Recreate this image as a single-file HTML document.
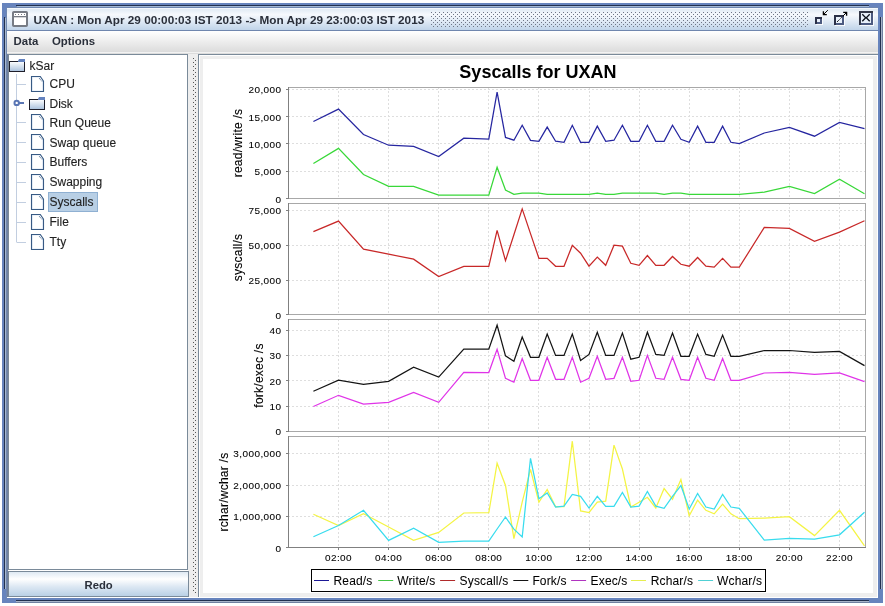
<!DOCTYPE html>
<html><head><meta charset="utf-8"><style>
html,body{margin:0;padding:0;}
body{width:885px;height:606px;overflow:hidden;background:#fff;position:relative;font-family:"Liberation Sans",sans-serif;}
svg{position:absolute;left:0;top:0;will-change:transform;}
text{font-family:"Liberation Sans",sans-serif;}
.tk{font-size:10px;letter-spacing:0.42px;fill:#000;stroke:#000;stroke-width:0.08px;}
.yl{font-size:12px;letter-spacing:0.25px;fill:#000;stroke:#000;stroke-width:0.12px;}
.lg{font-size:12px;letter-spacing:0.15px;fill:#000;stroke:#000;stroke-width:0.05px;}
.tr{font-size:12px;fill:#222;stroke:#222;stroke-width:0.12px;}
.tt{font-size:11.75px;font-weight:bold;fill:#2a2f3a;}
.mn{font-size:11.4px;font-weight:bold;fill:#2a2f3a;}
.ttl{font-size:18px;font-weight:bold;fill:#000;}
</style></head><body>
<svg width="885" height="606" viewBox="0 0 885 606" shape-rendering="auto">
<defs>
<linearGradient id="tg" x1="0" y1="0" x2="0" y2="1">
 <stop offset="0" stop-color="#dde8f3"/><stop offset="0.3" stop-color="#f6f9fd"/><stop offset="0.6" stop-color="#e0eaf5"/><stop offset="1" stop-color="#c0d4e9"/>
</linearGradient>
<linearGradient id="mg" x1="0" y1="0" x2="0" y2="1">
 <stop offset="0" stop-color="#ffffff"/><stop offset="1" stop-color="#dadada"/>
</linearGradient>
<linearGradient id="bg" x1="0" y1="0" x2="0" y2="1">
 <stop offset="0" stop-color="#dde8f3"/><stop offset="0.3" stop-color="#ffffff"/><stop offset="0.6" stop-color="#dde8f3"/><stop offset="1" stop-color="#b8cfe5"/>
</linearGradient>
<linearGradient id="fg" x1="0" y1="0" x2="0" y2="1">
 <stop offset="0" stop-color="#ffffff"/><stop offset="1" stop-color="#a8c0dc"/>
</linearGradient>
<clipPath id="pc1"><rect x="288" y="87" width="578" height="112"/></clipPath>
<clipPath id="pc2"><rect x="288" y="203" width="578" height="112"/></clipPath>
<clipPath id="pc3"><rect x="288" y="319" width="578" height="113"/></clipPath>
<clipPath id="pc4"><rect x="288" y="436" width="578" height="112"/></clipPath>
</defs>
<!-- window frame -->
<rect x="2" y="3" width="881" height="600" fill="#6784bd"/>
<rect x="16" y="5" width="853" height="1" fill="#22304f"/>
<rect x="17" y="6" width="852" height="1" fill="#a3b8d4"/>
<rect x="7" y="7" width="871" height="1" fill="#6e86b0"/>
<rect x="4" y="17" width="1" height="572" fill="#22304f"/>
<rect x="5" y="18" width="1" height="571" fill="#a8b8cc"/>
<rect x="6" y="8" width="1" height="590" fill="#7088b0"/>
<rect x="880" y="17" width="1" height="572" fill="#22304f"/>
<rect x="881" y="17" width="1" height="572" fill="#a8b4c8"/>
<rect x="882" y="17" width="1" height="572" fill="#7080a0"/>
<rect x="16" y="600" width="853" height="1" fill="#22304f"/>
<rect x="16" y="601" width="853" height="1" fill="#a8b4c8"/>
<rect x="16" y="602" width="853" height="1" fill="#7080a0"/>
<!-- content -->
<rect x="7" y="8" width="871" height="590" fill="#eeeeee"/>
<!-- title bar -->
<rect x="7" y="8" width="871" height="22" fill="url(#tg)"/>
<rect x="7" y="8" width="871" height="1" fill="#f4f8fc"/>
<rect x="7" y="30" width="871" height="1" fill="#6f86ae"/>
<!-- frame icon -->
<rect x="13" y="12" width="14" height="14" rx="0.8" fill="#fff" stroke="#767b84" stroke-width="2"/>
<rect x="13" y="16" width="14" height="1.3" fill="#767b84"/>
<rect x="15" y="14" width="1" height="1" fill="#767b84"/><rect x="18" y="14" width="1" height="1" fill="#767b84"/><rect x="21" y="14" width="1" height="1" fill="#767b84"/><rect x="24" y="14" width="1" height="1" fill="#767b84"/>
<text x="33.6" y="23.6" class="tt">UXAN : Mon Apr 29 00:00:03 IST 2013 -&gt; Mon Apr 29 23:00:03 IST 2013</text>
<rect x="431" y="12" width="1" height="1" fill="#6f7686"/><rect x="435" y="12" width="1" height="1" fill="#6f7686"/><rect x="439" y="12" width="1" height="1" fill="#6f7686"/><rect x="443" y="12" width="1" height="1" fill="#6f7686"/><rect x="447" y="12" width="1" height="1" fill="#6f7686"/><rect x="451" y="12" width="1" height="1" fill="#6f7686"/><rect x="455" y="12" width="1" height="1" fill="#6f7686"/><rect x="459" y="12" width="1" height="1" fill="#6f7686"/><rect x="463" y="12" width="1" height="1" fill="#6f7686"/><rect x="467" y="12" width="1" height="1" fill="#6f7686"/><rect x="471" y="12" width="1" height="1" fill="#6f7686"/><rect x="475" y="12" width="1" height="1" fill="#6f7686"/><rect x="479" y="12" width="1" height="1" fill="#6f7686"/><rect x="483" y="12" width="1" height="1" fill="#6f7686"/><rect x="487" y="12" width="1" height="1" fill="#6f7686"/><rect x="491" y="12" width="1" height="1" fill="#6f7686"/><rect x="495" y="12" width="1" height="1" fill="#6f7686"/><rect x="499" y="12" width="1" height="1" fill="#6f7686"/><rect x="503" y="12" width="1" height="1" fill="#6f7686"/><rect x="507" y="12" width="1" height="1" fill="#6f7686"/><rect x="511" y="12" width="1" height="1" fill="#6f7686"/><rect x="515" y="12" width="1" height="1" fill="#6f7686"/><rect x="519" y="12" width="1" height="1" fill="#6f7686"/><rect x="523" y="12" width="1" height="1" fill="#6f7686"/><rect x="527" y="12" width="1" height="1" fill="#6f7686"/><rect x="531" y="12" width="1" height="1" fill="#6f7686"/><rect x="535" y="12" width="1" height="1" fill="#6f7686"/><rect x="539" y="12" width="1" height="1" fill="#6f7686"/><rect x="543" y="12" width="1" height="1" fill="#6f7686"/><rect x="547" y="12" width="1" height="1" fill="#6f7686"/><rect x="551" y="12" width="1" height="1" fill="#6f7686"/><rect x="555" y="12" width="1" height="1" fill="#6f7686"/><rect x="559" y="12" width="1" height="1" fill="#6f7686"/><rect x="563" y="12" width="1" height="1" fill="#6f7686"/><rect x="567" y="12" width="1" height="1" fill="#6f7686"/><rect x="571" y="12" width="1" height="1" fill="#6f7686"/><rect x="575" y="12" width="1" height="1" fill="#6f7686"/><rect x="579" y="12" width="1" height="1" fill="#6f7686"/><rect x="583" y="12" width="1" height="1" fill="#6f7686"/><rect x="587" y="12" width="1" height="1" fill="#6f7686"/><rect x="591" y="12" width="1" height="1" fill="#6f7686"/><rect x="595" y="12" width="1" height="1" fill="#6f7686"/><rect x="599" y="12" width="1" height="1" fill="#6f7686"/><rect x="603" y="12" width="1" height="1" fill="#6f7686"/><rect x="607" y="12" width="1" height="1" fill="#6f7686"/><rect x="611" y="12" width="1" height="1" fill="#6f7686"/><rect x="615" y="12" width="1" height="1" fill="#6f7686"/><rect x="619" y="12" width="1" height="1" fill="#6f7686"/><rect x="623" y="12" width="1" height="1" fill="#6f7686"/><rect x="627" y="12" width="1" height="1" fill="#6f7686"/><rect x="631" y="12" width="1" height="1" fill="#6f7686"/><rect x="635" y="12" width="1" height="1" fill="#6f7686"/><rect x="639" y="12" width="1" height="1" fill="#6f7686"/><rect x="643" y="12" width="1" height="1" fill="#6f7686"/><rect x="647" y="12" width="1" height="1" fill="#6f7686"/><rect x="651" y="12" width="1" height="1" fill="#6f7686"/><rect x="655" y="12" width="1" height="1" fill="#6f7686"/><rect x="659" y="12" width="1" height="1" fill="#6f7686"/><rect x="663" y="12" width="1" height="1" fill="#6f7686"/><rect x="667" y="12" width="1" height="1" fill="#6f7686"/><rect x="671" y="12" width="1" height="1" fill="#6f7686"/><rect x="675" y="12" width="1" height="1" fill="#6f7686"/><rect x="679" y="12" width="1" height="1" fill="#6f7686"/><rect x="683" y="12" width="1" height="1" fill="#6f7686"/><rect x="687" y="12" width="1" height="1" fill="#6f7686"/><rect x="691" y="12" width="1" height="1" fill="#6f7686"/><rect x="695" y="12" width="1" height="1" fill="#6f7686"/><rect x="699" y="12" width="1" height="1" fill="#6f7686"/><rect x="703" y="12" width="1" height="1" fill="#6f7686"/><rect x="707" y="12" width="1" height="1" fill="#6f7686"/><rect x="711" y="12" width="1" height="1" fill="#6f7686"/><rect x="715" y="12" width="1" height="1" fill="#6f7686"/><rect x="719" y="12" width="1" height="1" fill="#6f7686"/><rect x="723" y="12" width="1" height="1" fill="#6f7686"/><rect x="727" y="12" width="1" height="1" fill="#6f7686"/><rect x="731" y="12" width="1" height="1" fill="#6f7686"/><rect x="735" y="12" width="1" height="1" fill="#6f7686"/><rect x="739" y="12" width="1" height="1" fill="#6f7686"/><rect x="743" y="12" width="1" height="1" fill="#6f7686"/><rect x="747" y="12" width="1" height="1" fill="#6f7686"/><rect x="751" y="12" width="1" height="1" fill="#6f7686"/><rect x="755" y="12" width="1" height="1" fill="#6f7686"/><rect x="759" y="12" width="1" height="1" fill="#6f7686"/><rect x="763" y="12" width="1" height="1" fill="#6f7686"/><rect x="767" y="12" width="1" height="1" fill="#6f7686"/><rect x="771" y="12" width="1" height="1" fill="#6f7686"/><rect x="775" y="12" width="1" height="1" fill="#6f7686"/><rect x="779" y="12" width="1" height="1" fill="#6f7686"/><rect x="783" y="12" width="1" height="1" fill="#6f7686"/><rect x="787" y="12" width="1" height="1" fill="#6f7686"/><rect x="791" y="12" width="1" height="1" fill="#6f7686"/><rect x="795" y="12" width="1" height="1" fill="#6f7686"/><rect x="799" y="12" width="1" height="1" fill="#6f7686"/><rect x="803" y="12" width="1" height="1" fill="#6f7686"/><rect x="807" y="12" width="1" height="1" fill="#6f7686"/><rect x="433" y="14" width="1" height="1" fill="#6f7686"/><rect x="437" y="14" width="1" height="1" fill="#6f7686"/><rect x="441" y="14" width="1" height="1" fill="#6f7686"/><rect x="445" y="14" width="1" height="1" fill="#6f7686"/><rect x="449" y="14" width="1" height="1" fill="#6f7686"/><rect x="453" y="14" width="1" height="1" fill="#6f7686"/><rect x="457" y="14" width="1" height="1" fill="#6f7686"/><rect x="461" y="14" width="1" height="1" fill="#6f7686"/><rect x="465" y="14" width="1" height="1" fill="#6f7686"/><rect x="469" y="14" width="1" height="1" fill="#6f7686"/><rect x="473" y="14" width="1" height="1" fill="#6f7686"/><rect x="477" y="14" width="1" height="1" fill="#6f7686"/><rect x="481" y="14" width="1" height="1" fill="#6f7686"/><rect x="485" y="14" width="1" height="1" fill="#6f7686"/><rect x="489" y="14" width="1" height="1" fill="#6f7686"/><rect x="493" y="14" width="1" height="1" fill="#6f7686"/><rect x="497" y="14" width="1" height="1" fill="#6f7686"/><rect x="501" y="14" width="1" height="1" fill="#6f7686"/><rect x="505" y="14" width="1" height="1" fill="#6f7686"/><rect x="509" y="14" width="1" height="1" fill="#6f7686"/><rect x="513" y="14" width="1" height="1" fill="#6f7686"/><rect x="517" y="14" width="1" height="1" fill="#6f7686"/><rect x="521" y="14" width="1" height="1" fill="#6f7686"/><rect x="525" y="14" width="1" height="1" fill="#6f7686"/><rect x="529" y="14" width="1" height="1" fill="#6f7686"/><rect x="533" y="14" width="1" height="1" fill="#6f7686"/><rect x="537" y="14" width="1" height="1" fill="#6f7686"/><rect x="541" y="14" width="1" height="1" fill="#6f7686"/><rect x="545" y="14" width="1" height="1" fill="#6f7686"/><rect x="549" y="14" width="1" height="1" fill="#6f7686"/><rect x="553" y="14" width="1" height="1" fill="#6f7686"/><rect x="557" y="14" width="1" height="1" fill="#6f7686"/><rect x="561" y="14" width="1" height="1" fill="#6f7686"/><rect x="565" y="14" width="1" height="1" fill="#6f7686"/><rect x="569" y="14" width="1" height="1" fill="#6f7686"/><rect x="573" y="14" width="1" height="1" fill="#6f7686"/><rect x="577" y="14" width="1" height="1" fill="#6f7686"/><rect x="581" y="14" width="1" height="1" fill="#6f7686"/><rect x="585" y="14" width="1" height="1" fill="#6f7686"/><rect x="589" y="14" width="1" height="1" fill="#6f7686"/><rect x="593" y="14" width="1" height="1" fill="#6f7686"/><rect x="597" y="14" width="1" height="1" fill="#6f7686"/><rect x="601" y="14" width="1" height="1" fill="#6f7686"/><rect x="605" y="14" width="1" height="1" fill="#6f7686"/><rect x="609" y="14" width="1" height="1" fill="#6f7686"/><rect x="613" y="14" width="1" height="1" fill="#6f7686"/><rect x="617" y="14" width="1" height="1" fill="#6f7686"/><rect x="621" y="14" width="1" height="1" fill="#6f7686"/><rect x="625" y="14" width="1" height="1" fill="#6f7686"/><rect x="629" y="14" width="1" height="1" fill="#6f7686"/><rect x="633" y="14" width="1" height="1" fill="#6f7686"/><rect x="637" y="14" width="1" height="1" fill="#6f7686"/><rect x="641" y="14" width="1" height="1" fill="#6f7686"/><rect x="645" y="14" width="1" height="1" fill="#6f7686"/><rect x="649" y="14" width="1" height="1" fill="#6f7686"/><rect x="653" y="14" width="1" height="1" fill="#6f7686"/><rect x="657" y="14" width="1" height="1" fill="#6f7686"/><rect x="661" y="14" width="1" height="1" fill="#6f7686"/><rect x="665" y="14" width="1" height="1" fill="#6f7686"/><rect x="669" y="14" width="1" height="1" fill="#6f7686"/><rect x="673" y="14" width="1" height="1" fill="#6f7686"/><rect x="677" y="14" width="1" height="1" fill="#6f7686"/><rect x="681" y="14" width="1" height="1" fill="#6f7686"/><rect x="685" y="14" width="1" height="1" fill="#6f7686"/><rect x="689" y="14" width="1" height="1" fill="#6f7686"/><rect x="693" y="14" width="1" height="1" fill="#6f7686"/><rect x="697" y="14" width="1" height="1" fill="#6f7686"/><rect x="701" y="14" width="1" height="1" fill="#6f7686"/><rect x="705" y="14" width="1" height="1" fill="#6f7686"/><rect x="709" y="14" width="1" height="1" fill="#6f7686"/><rect x="713" y="14" width="1" height="1" fill="#6f7686"/><rect x="717" y="14" width="1" height="1" fill="#6f7686"/><rect x="721" y="14" width="1" height="1" fill="#6f7686"/><rect x="725" y="14" width="1" height="1" fill="#6f7686"/><rect x="729" y="14" width="1" height="1" fill="#6f7686"/><rect x="733" y="14" width="1" height="1" fill="#6f7686"/><rect x="737" y="14" width="1" height="1" fill="#6f7686"/><rect x="741" y="14" width="1" height="1" fill="#6f7686"/><rect x="745" y="14" width="1" height="1" fill="#6f7686"/><rect x="749" y="14" width="1" height="1" fill="#6f7686"/><rect x="753" y="14" width="1" height="1" fill="#6f7686"/><rect x="757" y="14" width="1" height="1" fill="#6f7686"/><rect x="761" y="14" width="1" height="1" fill="#6f7686"/><rect x="765" y="14" width="1" height="1" fill="#6f7686"/><rect x="769" y="14" width="1" height="1" fill="#6f7686"/><rect x="773" y="14" width="1" height="1" fill="#6f7686"/><rect x="777" y="14" width="1" height="1" fill="#6f7686"/><rect x="781" y="14" width="1" height="1" fill="#6f7686"/><rect x="785" y="14" width="1" height="1" fill="#6f7686"/><rect x="789" y="14" width="1" height="1" fill="#6f7686"/><rect x="793" y="14" width="1" height="1" fill="#6f7686"/><rect x="797" y="14" width="1" height="1" fill="#6f7686"/><rect x="801" y="14" width="1" height="1" fill="#6f7686"/><rect x="805" y="14" width="1" height="1" fill="#6f7686"/><rect x="431" y="16" width="1" height="1" fill="#6f7686"/><rect x="435" y="16" width="1" height="1" fill="#6f7686"/><rect x="439" y="16" width="1" height="1" fill="#6f7686"/><rect x="443" y="16" width="1" height="1" fill="#6f7686"/><rect x="447" y="16" width="1" height="1" fill="#6f7686"/><rect x="451" y="16" width="1" height="1" fill="#6f7686"/><rect x="455" y="16" width="1" height="1" fill="#6f7686"/><rect x="459" y="16" width="1" height="1" fill="#6f7686"/><rect x="463" y="16" width="1" height="1" fill="#6f7686"/><rect x="467" y="16" width="1" height="1" fill="#6f7686"/><rect x="471" y="16" width="1" height="1" fill="#6f7686"/><rect x="475" y="16" width="1" height="1" fill="#6f7686"/><rect x="479" y="16" width="1" height="1" fill="#6f7686"/><rect x="483" y="16" width="1" height="1" fill="#6f7686"/><rect x="487" y="16" width="1" height="1" fill="#6f7686"/><rect x="491" y="16" width="1" height="1" fill="#6f7686"/><rect x="495" y="16" width="1" height="1" fill="#6f7686"/><rect x="499" y="16" width="1" height="1" fill="#6f7686"/><rect x="503" y="16" width="1" height="1" fill="#6f7686"/><rect x="507" y="16" width="1" height="1" fill="#6f7686"/><rect x="511" y="16" width="1" height="1" fill="#6f7686"/><rect x="515" y="16" width="1" height="1" fill="#6f7686"/><rect x="519" y="16" width="1" height="1" fill="#6f7686"/><rect x="523" y="16" width="1" height="1" fill="#6f7686"/><rect x="527" y="16" width="1" height="1" fill="#6f7686"/><rect x="531" y="16" width="1" height="1" fill="#6f7686"/><rect x="535" y="16" width="1" height="1" fill="#6f7686"/><rect x="539" y="16" width="1" height="1" fill="#6f7686"/><rect x="543" y="16" width="1" height="1" fill="#6f7686"/><rect x="547" y="16" width="1" height="1" fill="#6f7686"/><rect x="551" y="16" width="1" height="1" fill="#6f7686"/><rect x="555" y="16" width="1" height="1" fill="#6f7686"/><rect x="559" y="16" width="1" height="1" fill="#6f7686"/><rect x="563" y="16" width="1" height="1" fill="#6f7686"/><rect x="567" y="16" width="1" height="1" fill="#6f7686"/><rect x="571" y="16" width="1" height="1" fill="#6f7686"/><rect x="575" y="16" width="1" height="1" fill="#6f7686"/><rect x="579" y="16" width="1" height="1" fill="#6f7686"/><rect x="583" y="16" width="1" height="1" fill="#6f7686"/><rect x="587" y="16" width="1" height="1" fill="#6f7686"/><rect x="591" y="16" width="1" height="1" fill="#6f7686"/><rect x="595" y="16" width="1" height="1" fill="#6f7686"/><rect x="599" y="16" width="1" height="1" fill="#6f7686"/><rect x="603" y="16" width="1" height="1" fill="#6f7686"/><rect x="607" y="16" width="1" height="1" fill="#6f7686"/><rect x="611" y="16" width="1" height="1" fill="#6f7686"/><rect x="615" y="16" width="1" height="1" fill="#6f7686"/><rect x="619" y="16" width="1" height="1" fill="#6f7686"/><rect x="623" y="16" width="1" height="1" fill="#6f7686"/><rect x="627" y="16" width="1" height="1" fill="#6f7686"/><rect x="631" y="16" width="1" height="1" fill="#6f7686"/><rect x="635" y="16" width="1" height="1" fill="#6f7686"/><rect x="639" y="16" width="1" height="1" fill="#6f7686"/><rect x="643" y="16" width="1" height="1" fill="#6f7686"/><rect x="647" y="16" width="1" height="1" fill="#6f7686"/><rect x="651" y="16" width="1" height="1" fill="#6f7686"/><rect x="655" y="16" width="1" height="1" fill="#6f7686"/><rect x="659" y="16" width="1" height="1" fill="#6f7686"/><rect x="663" y="16" width="1" height="1" fill="#6f7686"/><rect x="667" y="16" width="1" height="1" fill="#6f7686"/><rect x="671" y="16" width="1" height="1" fill="#6f7686"/><rect x="675" y="16" width="1" height="1" fill="#6f7686"/><rect x="679" y="16" width="1" height="1" fill="#6f7686"/><rect x="683" y="16" width="1" height="1" fill="#6f7686"/><rect x="687" y="16" width="1" height="1" fill="#6f7686"/><rect x="691" y="16" width="1" height="1" fill="#6f7686"/><rect x="695" y="16" width="1" height="1" fill="#6f7686"/><rect x="699" y="16" width="1" height="1" fill="#6f7686"/><rect x="703" y="16" width="1" height="1" fill="#6f7686"/><rect x="707" y="16" width="1" height="1" fill="#6f7686"/><rect x="711" y="16" width="1" height="1" fill="#6f7686"/><rect x="715" y="16" width="1" height="1" fill="#6f7686"/><rect x="719" y="16" width="1" height="1" fill="#6f7686"/><rect x="723" y="16" width="1" height="1" fill="#6f7686"/><rect x="727" y="16" width="1" height="1" fill="#6f7686"/><rect x="731" y="16" width="1" height="1" fill="#6f7686"/><rect x="735" y="16" width="1" height="1" fill="#6f7686"/><rect x="739" y="16" width="1" height="1" fill="#6f7686"/><rect x="743" y="16" width="1" height="1" fill="#6f7686"/><rect x="747" y="16" width="1" height="1" fill="#6f7686"/><rect x="751" y="16" width="1" height="1" fill="#6f7686"/><rect x="755" y="16" width="1" height="1" fill="#6f7686"/><rect x="759" y="16" width="1" height="1" fill="#6f7686"/><rect x="763" y="16" width="1" height="1" fill="#6f7686"/><rect x="767" y="16" width="1" height="1" fill="#6f7686"/><rect x="771" y="16" width="1" height="1" fill="#6f7686"/><rect x="775" y="16" width="1" height="1" fill="#6f7686"/><rect x="779" y="16" width="1" height="1" fill="#6f7686"/><rect x="783" y="16" width="1" height="1" fill="#6f7686"/><rect x="787" y="16" width="1" height="1" fill="#6f7686"/><rect x="791" y="16" width="1" height="1" fill="#6f7686"/><rect x="795" y="16" width="1" height="1" fill="#6f7686"/><rect x="799" y="16" width="1" height="1" fill="#6f7686"/><rect x="803" y="16" width="1" height="1" fill="#6f7686"/><rect x="807" y="16" width="1" height="1" fill="#6f7686"/><rect x="433" y="18" width="1" height="1" fill="#6f7686"/><rect x="437" y="18" width="1" height="1" fill="#6f7686"/><rect x="441" y="18" width="1" height="1" fill="#6f7686"/><rect x="445" y="18" width="1" height="1" fill="#6f7686"/><rect x="449" y="18" width="1" height="1" fill="#6f7686"/><rect x="453" y="18" width="1" height="1" fill="#6f7686"/><rect x="457" y="18" width="1" height="1" fill="#6f7686"/><rect x="461" y="18" width="1" height="1" fill="#6f7686"/><rect x="465" y="18" width="1" height="1" fill="#6f7686"/><rect x="469" y="18" width="1" height="1" fill="#6f7686"/><rect x="473" y="18" width="1" height="1" fill="#6f7686"/><rect x="477" y="18" width="1" height="1" fill="#6f7686"/><rect x="481" y="18" width="1" height="1" fill="#6f7686"/><rect x="485" y="18" width="1" height="1" fill="#6f7686"/><rect x="489" y="18" width="1" height="1" fill="#6f7686"/><rect x="493" y="18" width="1" height="1" fill="#6f7686"/><rect x="497" y="18" width="1" height="1" fill="#6f7686"/><rect x="501" y="18" width="1" height="1" fill="#6f7686"/><rect x="505" y="18" width="1" height="1" fill="#6f7686"/><rect x="509" y="18" width="1" height="1" fill="#6f7686"/><rect x="513" y="18" width="1" height="1" fill="#6f7686"/><rect x="517" y="18" width="1" height="1" fill="#6f7686"/><rect x="521" y="18" width="1" height="1" fill="#6f7686"/><rect x="525" y="18" width="1" height="1" fill="#6f7686"/><rect x="529" y="18" width="1" height="1" fill="#6f7686"/><rect x="533" y="18" width="1" height="1" fill="#6f7686"/><rect x="537" y="18" width="1" height="1" fill="#6f7686"/><rect x="541" y="18" width="1" height="1" fill="#6f7686"/><rect x="545" y="18" width="1" height="1" fill="#6f7686"/><rect x="549" y="18" width="1" height="1" fill="#6f7686"/><rect x="553" y="18" width="1" height="1" fill="#6f7686"/><rect x="557" y="18" width="1" height="1" fill="#6f7686"/><rect x="561" y="18" width="1" height="1" fill="#6f7686"/><rect x="565" y="18" width="1" height="1" fill="#6f7686"/><rect x="569" y="18" width="1" height="1" fill="#6f7686"/><rect x="573" y="18" width="1" height="1" fill="#6f7686"/><rect x="577" y="18" width="1" height="1" fill="#6f7686"/><rect x="581" y="18" width="1" height="1" fill="#6f7686"/><rect x="585" y="18" width="1" height="1" fill="#6f7686"/><rect x="589" y="18" width="1" height="1" fill="#6f7686"/><rect x="593" y="18" width="1" height="1" fill="#6f7686"/><rect x="597" y="18" width="1" height="1" fill="#6f7686"/><rect x="601" y="18" width="1" height="1" fill="#6f7686"/><rect x="605" y="18" width="1" height="1" fill="#6f7686"/><rect x="609" y="18" width="1" height="1" fill="#6f7686"/><rect x="613" y="18" width="1" height="1" fill="#6f7686"/><rect x="617" y="18" width="1" height="1" fill="#6f7686"/><rect x="621" y="18" width="1" height="1" fill="#6f7686"/><rect x="625" y="18" width="1" height="1" fill="#6f7686"/><rect x="629" y="18" width="1" height="1" fill="#6f7686"/><rect x="633" y="18" width="1" height="1" fill="#6f7686"/><rect x="637" y="18" width="1" height="1" fill="#6f7686"/><rect x="641" y="18" width="1" height="1" fill="#6f7686"/><rect x="645" y="18" width="1" height="1" fill="#6f7686"/><rect x="649" y="18" width="1" height="1" fill="#6f7686"/><rect x="653" y="18" width="1" height="1" fill="#6f7686"/><rect x="657" y="18" width="1" height="1" fill="#6f7686"/><rect x="661" y="18" width="1" height="1" fill="#6f7686"/><rect x="665" y="18" width="1" height="1" fill="#6f7686"/><rect x="669" y="18" width="1" height="1" fill="#6f7686"/><rect x="673" y="18" width="1" height="1" fill="#6f7686"/><rect x="677" y="18" width="1" height="1" fill="#6f7686"/><rect x="681" y="18" width="1" height="1" fill="#6f7686"/><rect x="685" y="18" width="1" height="1" fill="#6f7686"/><rect x="689" y="18" width="1" height="1" fill="#6f7686"/><rect x="693" y="18" width="1" height="1" fill="#6f7686"/><rect x="697" y="18" width="1" height="1" fill="#6f7686"/><rect x="701" y="18" width="1" height="1" fill="#6f7686"/><rect x="705" y="18" width="1" height="1" fill="#6f7686"/><rect x="709" y="18" width="1" height="1" fill="#6f7686"/><rect x="713" y="18" width="1" height="1" fill="#6f7686"/><rect x="717" y="18" width="1" height="1" fill="#6f7686"/><rect x="721" y="18" width="1" height="1" fill="#6f7686"/><rect x="725" y="18" width="1" height="1" fill="#6f7686"/><rect x="729" y="18" width="1" height="1" fill="#6f7686"/><rect x="733" y="18" width="1" height="1" fill="#6f7686"/><rect x="737" y="18" width="1" height="1" fill="#6f7686"/><rect x="741" y="18" width="1" height="1" fill="#6f7686"/><rect x="745" y="18" width="1" height="1" fill="#6f7686"/><rect x="749" y="18" width="1" height="1" fill="#6f7686"/><rect x="753" y="18" width="1" height="1" fill="#6f7686"/><rect x="757" y="18" width="1" height="1" fill="#6f7686"/><rect x="761" y="18" width="1" height="1" fill="#6f7686"/><rect x="765" y="18" width="1" height="1" fill="#6f7686"/><rect x="769" y="18" width="1" height="1" fill="#6f7686"/><rect x="773" y="18" width="1" height="1" fill="#6f7686"/><rect x="777" y="18" width="1" height="1" fill="#6f7686"/><rect x="781" y="18" width="1" height="1" fill="#6f7686"/><rect x="785" y="18" width="1" height="1" fill="#6f7686"/><rect x="789" y="18" width="1" height="1" fill="#6f7686"/><rect x="793" y="18" width="1" height="1" fill="#6f7686"/><rect x="797" y="18" width="1" height="1" fill="#6f7686"/><rect x="801" y="18" width="1" height="1" fill="#6f7686"/><rect x="805" y="18" width="1" height="1" fill="#6f7686"/><rect x="431" y="20" width="1" height="1" fill="#6f7686"/><rect x="435" y="20" width="1" height="1" fill="#6f7686"/><rect x="439" y="20" width="1" height="1" fill="#6f7686"/><rect x="443" y="20" width="1" height="1" fill="#6f7686"/><rect x="447" y="20" width="1" height="1" fill="#6f7686"/><rect x="451" y="20" width="1" height="1" fill="#6f7686"/><rect x="455" y="20" width="1" height="1" fill="#6f7686"/><rect x="459" y="20" width="1" height="1" fill="#6f7686"/><rect x="463" y="20" width="1" height="1" fill="#6f7686"/><rect x="467" y="20" width="1" height="1" fill="#6f7686"/><rect x="471" y="20" width="1" height="1" fill="#6f7686"/><rect x="475" y="20" width="1" height="1" fill="#6f7686"/><rect x="479" y="20" width="1" height="1" fill="#6f7686"/><rect x="483" y="20" width="1" height="1" fill="#6f7686"/><rect x="487" y="20" width="1" height="1" fill="#6f7686"/><rect x="491" y="20" width="1" height="1" fill="#6f7686"/><rect x="495" y="20" width="1" height="1" fill="#6f7686"/><rect x="499" y="20" width="1" height="1" fill="#6f7686"/><rect x="503" y="20" width="1" height="1" fill="#6f7686"/><rect x="507" y="20" width="1" height="1" fill="#6f7686"/><rect x="511" y="20" width="1" height="1" fill="#6f7686"/><rect x="515" y="20" width="1" height="1" fill="#6f7686"/><rect x="519" y="20" width="1" height="1" fill="#6f7686"/><rect x="523" y="20" width="1" height="1" fill="#6f7686"/><rect x="527" y="20" width="1" height="1" fill="#6f7686"/><rect x="531" y="20" width="1" height="1" fill="#6f7686"/><rect x="535" y="20" width="1" height="1" fill="#6f7686"/><rect x="539" y="20" width="1" height="1" fill="#6f7686"/><rect x="543" y="20" width="1" height="1" fill="#6f7686"/><rect x="547" y="20" width="1" height="1" fill="#6f7686"/><rect x="551" y="20" width="1" height="1" fill="#6f7686"/><rect x="555" y="20" width="1" height="1" fill="#6f7686"/><rect x="559" y="20" width="1" height="1" fill="#6f7686"/><rect x="563" y="20" width="1" height="1" fill="#6f7686"/><rect x="567" y="20" width="1" height="1" fill="#6f7686"/><rect x="571" y="20" width="1" height="1" fill="#6f7686"/><rect x="575" y="20" width="1" height="1" fill="#6f7686"/><rect x="579" y="20" width="1" height="1" fill="#6f7686"/><rect x="583" y="20" width="1" height="1" fill="#6f7686"/><rect x="587" y="20" width="1" height="1" fill="#6f7686"/><rect x="591" y="20" width="1" height="1" fill="#6f7686"/><rect x="595" y="20" width="1" height="1" fill="#6f7686"/><rect x="599" y="20" width="1" height="1" fill="#6f7686"/><rect x="603" y="20" width="1" height="1" fill="#6f7686"/><rect x="607" y="20" width="1" height="1" fill="#6f7686"/><rect x="611" y="20" width="1" height="1" fill="#6f7686"/><rect x="615" y="20" width="1" height="1" fill="#6f7686"/><rect x="619" y="20" width="1" height="1" fill="#6f7686"/><rect x="623" y="20" width="1" height="1" fill="#6f7686"/><rect x="627" y="20" width="1" height="1" fill="#6f7686"/><rect x="631" y="20" width="1" height="1" fill="#6f7686"/><rect x="635" y="20" width="1" height="1" fill="#6f7686"/><rect x="639" y="20" width="1" height="1" fill="#6f7686"/><rect x="643" y="20" width="1" height="1" fill="#6f7686"/><rect x="647" y="20" width="1" height="1" fill="#6f7686"/><rect x="651" y="20" width="1" height="1" fill="#6f7686"/><rect x="655" y="20" width="1" height="1" fill="#6f7686"/><rect x="659" y="20" width="1" height="1" fill="#6f7686"/><rect x="663" y="20" width="1" height="1" fill="#6f7686"/><rect x="667" y="20" width="1" height="1" fill="#6f7686"/><rect x="671" y="20" width="1" height="1" fill="#6f7686"/><rect x="675" y="20" width="1" height="1" fill="#6f7686"/><rect x="679" y="20" width="1" height="1" fill="#6f7686"/><rect x="683" y="20" width="1" height="1" fill="#6f7686"/><rect x="687" y="20" width="1" height="1" fill="#6f7686"/><rect x="691" y="20" width="1" height="1" fill="#6f7686"/><rect x="695" y="20" width="1" height="1" fill="#6f7686"/><rect x="699" y="20" width="1" height="1" fill="#6f7686"/><rect x="703" y="20" width="1" height="1" fill="#6f7686"/><rect x="707" y="20" width="1" height="1" fill="#6f7686"/><rect x="711" y="20" width="1" height="1" fill="#6f7686"/><rect x="715" y="20" width="1" height="1" fill="#6f7686"/><rect x="719" y="20" width="1" height="1" fill="#6f7686"/><rect x="723" y="20" width="1" height="1" fill="#6f7686"/><rect x="727" y="20" width="1" height="1" fill="#6f7686"/><rect x="731" y="20" width="1" height="1" fill="#6f7686"/><rect x="735" y="20" width="1" height="1" fill="#6f7686"/><rect x="739" y="20" width="1" height="1" fill="#6f7686"/><rect x="743" y="20" width="1" height="1" fill="#6f7686"/><rect x="747" y="20" width="1" height="1" fill="#6f7686"/><rect x="751" y="20" width="1" height="1" fill="#6f7686"/><rect x="755" y="20" width="1" height="1" fill="#6f7686"/><rect x="759" y="20" width="1" height="1" fill="#6f7686"/><rect x="763" y="20" width="1" height="1" fill="#6f7686"/><rect x="767" y="20" width="1" height="1" fill="#6f7686"/><rect x="771" y="20" width="1" height="1" fill="#6f7686"/><rect x="775" y="20" width="1" height="1" fill="#6f7686"/><rect x="779" y="20" width="1" height="1" fill="#6f7686"/><rect x="783" y="20" width="1" height="1" fill="#6f7686"/><rect x="787" y="20" width="1" height="1" fill="#6f7686"/><rect x="791" y="20" width="1" height="1" fill="#6f7686"/><rect x="795" y="20" width="1" height="1" fill="#6f7686"/><rect x="799" y="20" width="1" height="1" fill="#6f7686"/><rect x="803" y="20" width="1" height="1" fill="#6f7686"/><rect x="807" y="20" width="1" height="1" fill="#6f7686"/><rect x="433" y="22" width="1" height="1" fill="#6f7686"/><rect x="437" y="22" width="1" height="1" fill="#6f7686"/><rect x="441" y="22" width="1" height="1" fill="#6f7686"/><rect x="445" y="22" width="1" height="1" fill="#6f7686"/><rect x="449" y="22" width="1" height="1" fill="#6f7686"/><rect x="453" y="22" width="1" height="1" fill="#6f7686"/><rect x="457" y="22" width="1" height="1" fill="#6f7686"/><rect x="461" y="22" width="1" height="1" fill="#6f7686"/><rect x="465" y="22" width="1" height="1" fill="#6f7686"/><rect x="469" y="22" width="1" height="1" fill="#6f7686"/><rect x="473" y="22" width="1" height="1" fill="#6f7686"/><rect x="477" y="22" width="1" height="1" fill="#6f7686"/><rect x="481" y="22" width="1" height="1" fill="#6f7686"/><rect x="485" y="22" width="1" height="1" fill="#6f7686"/><rect x="489" y="22" width="1" height="1" fill="#6f7686"/><rect x="493" y="22" width="1" height="1" fill="#6f7686"/><rect x="497" y="22" width="1" height="1" fill="#6f7686"/><rect x="501" y="22" width="1" height="1" fill="#6f7686"/><rect x="505" y="22" width="1" height="1" fill="#6f7686"/><rect x="509" y="22" width="1" height="1" fill="#6f7686"/><rect x="513" y="22" width="1" height="1" fill="#6f7686"/><rect x="517" y="22" width="1" height="1" fill="#6f7686"/><rect x="521" y="22" width="1" height="1" fill="#6f7686"/><rect x="525" y="22" width="1" height="1" fill="#6f7686"/><rect x="529" y="22" width="1" height="1" fill="#6f7686"/><rect x="533" y="22" width="1" height="1" fill="#6f7686"/><rect x="537" y="22" width="1" height="1" fill="#6f7686"/><rect x="541" y="22" width="1" height="1" fill="#6f7686"/><rect x="545" y="22" width="1" height="1" fill="#6f7686"/><rect x="549" y="22" width="1" height="1" fill="#6f7686"/><rect x="553" y="22" width="1" height="1" fill="#6f7686"/><rect x="557" y="22" width="1" height="1" fill="#6f7686"/><rect x="561" y="22" width="1" height="1" fill="#6f7686"/><rect x="565" y="22" width="1" height="1" fill="#6f7686"/><rect x="569" y="22" width="1" height="1" fill="#6f7686"/><rect x="573" y="22" width="1" height="1" fill="#6f7686"/><rect x="577" y="22" width="1" height="1" fill="#6f7686"/><rect x="581" y="22" width="1" height="1" fill="#6f7686"/><rect x="585" y="22" width="1" height="1" fill="#6f7686"/><rect x="589" y="22" width="1" height="1" fill="#6f7686"/><rect x="593" y="22" width="1" height="1" fill="#6f7686"/><rect x="597" y="22" width="1" height="1" fill="#6f7686"/><rect x="601" y="22" width="1" height="1" fill="#6f7686"/><rect x="605" y="22" width="1" height="1" fill="#6f7686"/><rect x="609" y="22" width="1" height="1" fill="#6f7686"/><rect x="613" y="22" width="1" height="1" fill="#6f7686"/><rect x="617" y="22" width="1" height="1" fill="#6f7686"/><rect x="621" y="22" width="1" height="1" fill="#6f7686"/><rect x="625" y="22" width="1" height="1" fill="#6f7686"/><rect x="629" y="22" width="1" height="1" fill="#6f7686"/><rect x="633" y="22" width="1" height="1" fill="#6f7686"/><rect x="637" y="22" width="1" height="1" fill="#6f7686"/><rect x="641" y="22" width="1" height="1" fill="#6f7686"/><rect x="645" y="22" width="1" height="1" fill="#6f7686"/><rect x="649" y="22" width="1" height="1" fill="#6f7686"/><rect x="653" y="22" width="1" height="1" fill="#6f7686"/><rect x="657" y="22" width="1" height="1" fill="#6f7686"/><rect x="661" y="22" width="1" height="1" fill="#6f7686"/><rect x="665" y="22" width="1" height="1" fill="#6f7686"/><rect x="669" y="22" width="1" height="1" fill="#6f7686"/><rect x="673" y="22" width="1" height="1" fill="#6f7686"/><rect x="677" y="22" width="1" height="1" fill="#6f7686"/><rect x="681" y="22" width="1" height="1" fill="#6f7686"/><rect x="685" y="22" width="1" height="1" fill="#6f7686"/><rect x="689" y="22" width="1" height="1" fill="#6f7686"/><rect x="693" y="22" width="1" height="1" fill="#6f7686"/><rect x="697" y="22" width="1" height="1" fill="#6f7686"/><rect x="701" y="22" width="1" height="1" fill="#6f7686"/><rect x="705" y="22" width="1" height="1" fill="#6f7686"/><rect x="709" y="22" width="1" height="1" fill="#6f7686"/><rect x="713" y="22" width="1" height="1" fill="#6f7686"/><rect x="717" y="22" width="1" height="1" fill="#6f7686"/><rect x="721" y="22" width="1" height="1" fill="#6f7686"/><rect x="725" y="22" width="1" height="1" fill="#6f7686"/><rect x="729" y="22" width="1" height="1" fill="#6f7686"/><rect x="733" y="22" width="1" height="1" fill="#6f7686"/><rect x="737" y="22" width="1" height="1" fill="#6f7686"/><rect x="741" y="22" width="1" height="1" fill="#6f7686"/><rect x="745" y="22" width="1" height="1" fill="#6f7686"/><rect x="749" y="22" width="1" height="1" fill="#6f7686"/><rect x="753" y="22" width="1" height="1" fill="#6f7686"/><rect x="757" y="22" width="1" height="1" fill="#6f7686"/><rect x="761" y="22" width="1" height="1" fill="#6f7686"/><rect x="765" y="22" width="1" height="1" fill="#6f7686"/><rect x="769" y="22" width="1" height="1" fill="#6f7686"/><rect x="773" y="22" width="1" height="1" fill="#6f7686"/><rect x="777" y="22" width="1" height="1" fill="#6f7686"/><rect x="781" y="22" width="1" height="1" fill="#6f7686"/><rect x="785" y="22" width="1" height="1" fill="#6f7686"/><rect x="789" y="22" width="1" height="1" fill="#6f7686"/><rect x="793" y="22" width="1" height="1" fill="#6f7686"/><rect x="797" y="22" width="1" height="1" fill="#6f7686"/><rect x="801" y="22" width="1" height="1" fill="#6f7686"/><rect x="805" y="22" width="1" height="1" fill="#6f7686"/><rect x="431" y="24" width="1" height="1" fill="#6f7686"/><rect x="435" y="24" width="1" height="1" fill="#6f7686"/><rect x="439" y="24" width="1" height="1" fill="#6f7686"/><rect x="443" y="24" width="1" height="1" fill="#6f7686"/><rect x="447" y="24" width="1" height="1" fill="#6f7686"/><rect x="451" y="24" width="1" height="1" fill="#6f7686"/><rect x="455" y="24" width="1" height="1" fill="#6f7686"/><rect x="459" y="24" width="1" height="1" fill="#6f7686"/><rect x="463" y="24" width="1" height="1" fill="#6f7686"/><rect x="467" y="24" width="1" height="1" fill="#6f7686"/><rect x="471" y="24" width="1" height="1" fill="#6f7686"/><rect x="475" y="24" width="1" height="1" fill="#6f7686"/><rect x="479" y="24" width="1" height="1" fill="#6f7686"/><rect x="483" y="24" width="1" height="1" fill="#6f7686"/><rect x="487" y="24" width="1" height="1" fill="#6f7686"/><rect x="491" y="24" width="1" height="1" fill="#6f7686"/><rect x="495" y="24" width="1" height="1" fill="#6f7686"/><rect x="499" y="24" width="1" height="1" fill="#6f7686"/><rect x="503" y="24" width="1" height="1" fill="#6f7686"/><rect x="507" y="24" width="1" height="1" fill="#6f7686"/><rect x="511" y="24" width="1" height="1" fill="#6f7686"/><rect x="515" y="24" width="1" height="1" fill="#6f7686"/><rect x="519" y="24" width="1" height="1" fill="#6f7686"/><rect x="523" y="24" width="1" height="1" fill="#6f7686"/><rect x="527" y="24" width="1" height="1" fill="#6f7686"/><rect x="531" y="24" width="1" height="1" fill="#6f7686"/><rect x="535" y="24" width="1" height="1" fill="#6f7686"/><rect x="539" y="24" width="1" height="1" fill="#6f7686"/><rect x="543" y="24" width="1" height="1" fill="#6f7686"/><rect x="547" y="24" width="1" height="1" fill="#6f7686"/><rect x="551" y="24" width="1" height="1" fill="#6f7686"/><rect x="555" y="24" width="1" height="1" fill="#6f7686"/><rect x="559" y="24" width="1" height="1" fill="#6f7686"/><rect x="563" y="24" width="1" height="1" fill="#6f7686"/><rect x="567" y="24" width="1" height="1" fill="#6f7686"/><rect x="571" y="24" width="1" height="1" fill="#6f7686"/><rect x="575" y="24" width="1" height="1" fill="#6f7686"/><rect x="579" y="24" width="1" height="1" fill="#6f7686"/><rect x="583" y="24" width="1" height="1" fill="#6f7686"/><rect x="587" y="24" width="1" height="1" fill="#6f7686"/><rect x="591" y="24" width="1" height="1" fill="#6f7686"/><rect x="595" y="24" width="1" height="1" fill="#6f7686"/><rect x="599" y="24" width="1" height="1" fill="#6f7686"/><rect x="603" y="24" width="1" height="1" fill="#6f7686"/><rect x="607" y="24" width="1" height="1" fill="#6f7686"/><rect x="611" y="24" width="1" height="1" fill="#6f7686"/><rect x="615" y="24" width="1" height="1" fill="#6f7686"/><rect x="619" y="24" width="1" height="1" fill="#6f7686"/><rect x="623" y="24" width="1" height="1" fill="#6f7686"/><rect x="627" y="24" width="1" height="1" fill="#6f7686"/><rect x="631" y="24" width="1" height="1" fill="#6f7686"/><rect x="635" y="24" width="1" height="1" fill="#6f7686"/><rect x="639" y="24" width="1" height="1" fill="#6f7686"/><rect x="643" y="24" width="1" height="1" fill="#6f7686"/><rect x="647" y="24" width="1" height="1" fill="#6f7686"/><rect x="651" y="24" width="1" height="1" fill="#6f7686"/><rect x="655" y="24" width="1" height="1" fill="#6f7686"/><rect x="659" y="24" width="1" height="1" fill="#6f7686"/><rect x="663" y="24" width="1" height="1" fill="#6f7686"/><rect x="667" y="24" width="1" height="1" fill="#6f7686"/><rect x="671" y="24" width="1" height="1" fill="#6f7686"/><rect x="675" y="24" width="1" height="1" fill="#6f7686"/><rect x="679" y="24" width="1" height="1" fill="#6f7686"/><rect x="683" y="24" width="1" height="1" fill="#6f7686"/><rect x="687" y="24" width="1" height="1" fill="#6f7686"/><rect x="691" y="24" width="1" height="1" fill="#6f7686"/><rect x="695" y="24" width="1" height="1" fill="#6f7686"/><rect x="699" y="24" width="1" height="1" fill="#6f7686"/><rect x="703" y="24" width="1" height="1" fill="#6f7686"/><rect x="707" y="24" width="1" height="1" fill="#6f7686"/><rect x="711" y="24" width="1" height="1" fill="#6f7686"/><rect x="715" y="24" width="1" height="1" fill="#6f7686"/><rect x="719" y="24" width="1" height="1" fill="#6f7686"/><rect x="723" y="24" width="1" height="1" fill="#6f7686"/><rect x="727" y="24" width="1" height="1" fill="#6f7686"/><rect x="731" y="24" width="1" height="1" fill="#6f7686"/><rect x="735" y="24" width="1" height="1" fill="#6f7686"/><rect x="739" y="24" width="1" height="1" fill="#6f7686"/><rect x="743" y="24" width="1" height="1" fill="#6f7686"/><rect x="747" y="24" width="1" height="1" fill="#6f7686"/><rect x="751" y="24" width="1" height="1" fill="#6f7686"/><rect x="755" y="24" width="1" height="1" fill="#6f7686"/><rect x="759" y="24" width="1" height="1" fill="#6f7686"/><rect x="763" y="24" width="1" height="1" fill="#6f7686"/><rect x="767" y="24" width="1" height="1" fill="#6f7686"/><rect x="771" y="24" width="1" height="1" fill="#6f7686"/><rect x="775" y="24" width="1" height="1" fill="#6f7686"/><rect x="779" y="24" width="1" height="1" fill="#6f7686"/><rect x="783" y="24" width="1" height="1" fill="#6f7686"/><rect x="787" y="24" width="1" height="1" fill="#6f7686"/><rect x="791" y="24" width="1" height="1" fill="#6f7686"/><rect x="795" y="24" width="1" height="1" fill="#6f7686"/><rect x="799" y="24" width="1" height="1" fill="#6f7686"/><rect x="803" y="24" width="1" height="1" fill="#6f7686"/><rect x="807" y="24" width="1" height="1" fill="#6f7686"/><rect x="433" y="26" width="1" height="1" fill="#6f7686"/><rect x="437" y="26" width="1" height="1" fill="#6f7686"/><rect x="441" y="26" width="1" height="1" fill="#6f7686"/><rect x="445" y="26" width="1" height="1" fill="#6f7686"/><rect x="449" y="26" width="1" height="1" fill="#6f7686"/><rect x="453" y="26" width="1" height="1" fill="#6f7686"/><rect x="457" y="26" width="1" height="1" fill="#6f7686"/><rect x="461" y="26" width="1" height="1" fill="#6f7686"/><rect x="465" y="26" width="1" height="1" fill="#6f7686"/><rect x="469" y="26" width="1" height="1" fill="#6f7686"/><rect x="473" y="26" width="1" height="1" fill="#6f7686"/><rect x="477" y="26" width="1" height="1" fill="#6f7686"/><rect x="481" y="26" width="1" height="1" fill="#6f7686"/><rect x="485" y="26" width="1" height="1" fill="#6f7686"/><rect x="489" y="26" width="1" height="1" fill="#6f7686"/><rect x="493" y="26" width="1" height="1" fill="#6f7686"/><rect x="497" y="26" width="1" height="1" fill="#6f7686"/><rect x="501" y="26" width="1" height="1" fill="#6f7686"/><rect x="505" y="26" width="1" height="1" fill="#6f7686"/><rect x="509" y="26" width="1" height="1" fill="#6f7686"/><rect x="513" y="26" width="1" height="1" fill="#6f7686"/><rect x="517" y="26" width="1" height="1" fill="#6f7686"/><rect x="521" y="26" width="1" height="1" fill="#6f7686"/><rect x="525" y="26" width="1" height="1" fill="#6f7686"/><rect x="529" y="26" width="1" height="1" fill="#6f7686"/><rect x="533" y="26" width="1" height="1" fill="#6f7686"/><rect x="537" y="26" width="1" height="1" fill="#6f7686"/><rect x="541" y="26" width="1" height="1" fill="#6f7686"/><rect x="545" y="26" width="1" height="1" fill="#6f7686"/><rect x="549" y="26" width="1" height="1" fill="#6f7686"/><rect x="553" y="26" width="1" height="1" fill="#6f7686"/><rect x="557" y="26" width="1" height="1" fill="#6f7686"/><rect x="561" y="26" width="1" height="1" fill="#6f7686"/><rect x="565" y="26" width="1" height="1" fill="#6f7686"/><rect x="569" y="26" width="1" height="1" fill="#6f7686"/><rect x="573" y="26" width="1" height="1" fill="#6f7686"/><rect x="577" y="26" width="1" height="1" fill="#6f7686"/><rect x="581" y="26" width="1" height="1" fill="#6f7686"/><rect x="585" y="26" width="1" height="1" fill="#6f7686"/><rect x="589" y="26" width="1" height="1" fill="#6f7686"/><rect x="593" y="26" width="1" height="1" fill="#6f7686"/><rect x="597" y="26" width="1" height="1" fill="#6f7686"/><rect x="601" y="26" width="1" height="1" fill="#6f7686"/><rect x="605" y="26" width="1" height="1" fill="#6f7686"/><rect x="609" y="26" width="1" height="1" fill="#6f7686"/><rect x="613" y="26" width="1" height="1" fill="#6f7686"/><rect x="617" y="26" width="1" height="1" fill="#6f7686"/><rect x="621" y="26" width="1" height="1" fill="#6f7686"/><rect x="625" y="26" width="1" height="1" fill="#6f7686"/><rect x="629" y="26" width="1" height="1" fill="#6f7686"/><rect x="633" y="26" width="1" height="1" fill="#6f7686"/><rect x="637" y="26" width="1" height="1" fill="#6f7686"/><rect x="641" y="26" width="1" height="1" fill="#6f7686"/><rect x="645" y="26" width="1" height="1" fill="#6f7686"/><rect x="649" y="26" width="1" height="1" fill="#6f7686"/><rect x="653" y="26" width="1" height="1" fill="#6f7686"/><rect x="657" y="26" width="1" height="1" fill="#6f7686"/><rect x="661" y="26" width="1" height="1" fill="#6f7686"/><rect x="665" y="26" width="1" height="1" fill="#6f7686"/><rect x="669" y="26" width="1" height="1" fill="#6f7686"/><rect x="673" y="26" width="1" height="1" fill="#6f7686"/><rect x="677" y="26" width="1" height="1" fill="#6f7686"/><rect x="681" y="26" width="1" height="1" fill="#6f7686"/><rect x="685" y="26" width="1" height="1" fill="#6f7686"/><rect x="689" y="26" width="1" height="1" fill="#6f7686"/><rect x="693" y="26" width="1" height="1" fill="#6f7686"/><rect x="697" y="26" width="1" height="1" fill="#6f7686"/><rect x="701" y="26" width="1" height="1" fill="#6f7686"/><rect x="705" y="26" width="1" height="1" fill="#6f7686"/><rect x="709" y="26" width="1" height="1" fill="#6f7686"/><rect x="713" y="26" width="1" height="1" fill="#6f7686"/><rect x="717" y="26" width="1" height="1" fill="#6f7686"/><rect x="721" y="26" width="1" height="1" fill="#6f7686"/><rect x="725" y="26" width="1" height="1" fill="#6f7686"/><rect x="729" y="26" width="1" height="1" fill="#6f7686"/><rect x="733" y="26" width="1" height="1" fill="#6f7686"/><rect x="737" y="26" width="1" height="1" fill="#6f7686"/><rect x="741" y="26" width="1" height="1" fill="#6f7686"/><rect x="745" y="26" width="1" height="1" fill="#6f7686"/><rect x="749" y="26" width="1" height="1" fill="#6f7686"/><rect x="753" y="26" width="1" height="1" fill="#6f7686"/><rect x="757" y="26" width="1" height="1" fill="#6f7686"/><rect x="761" y="26" width="1" height="1" fill="#6f7686"/><rect x="765" y="26" width="1" height="1" fill="#6f7686"/><rect x="769" y="26" width="1" height="1" fill="#6f7686"/><rect x="773" y="26" width="1" height="1" fill="#6f7686"/><rect x="777" y="26" width="1" height="1" fill="#6f7686"/><rect x="781" y="26" width="1" height="1" fill="#6f7686"/><rect x="785" y="26" width="1" height="1" fill="#6f7686"/><rect x="789" y="26" width="1" height="1" fill="#6f7686"/><rect x="793" y="26" width="1" height="1" fill="#6f7686"/><rect x="797" y="26" width="1" height="1" fill="#6f7686"/><rect x="801" y="26" width="1" height="1" fill="#6f7686"/><rect x="805" y="26" width="1" height="1" fill="#6f7686"/>
<!-- iconify -->
<rect x="815" y="17" width="7" height="7" fill="#4c5a80"/>
<rect x="815" y="17" width="7" height="2" fill="#2a3048"/><rect x="815" y="17" width="2" height="7" fill="#2a3048"/>
<rect x="817" y="19" width="3" height="3" fill="#e8f0fa"/>
<rect x="822" y="18" width="1" height="7" fill="#ffffff" opacity="0.8"/><rect x="816" y="24" width="7" height="1" fill="#ffffff" opacity="0.8"/>
<path d="M823.8,14.2 L827.8,10.2" stroke="#000" stroke-width="1"/>
<path d="M823.4,11.2 V14.6 H826.8" stroke="#000" stroke-width="1.35" fill="none"/>
<!-- maximize -->
<rect x="834" y="15" width="10" height="10" fill="#4c5a80"/>
<rect x="834" y="15" width="10" height="2" fill="#2a3048"/><rect x="834" y="15" width="2" height="10" fill="#2a3048"/>
<rect x="836" y="17" width="6" height="6" fill="#e8f0fa"/>
<rect x="844" y="16" width="1" height="10" fill="#ffffff" opacity="0.8"/><rect x="835" y="25" width="10" height="1" fill="#ffffff" opacity="0.8"/>
<path d="M837,22 L842,17" stroke="#000" stroke-width="1" stroke-dasharray="1.2,0.6"/>
<path d="M843,16 L846.6,12.4" stroke="#000" stroke-width="1"/>
<path d="M843.2,12.4 H846.6 V15.8" stroke="#000" stroke-width="1.35" fill="none"/>
<!-- close -->
<rect x="859" y="11" width="14" height="14" fill="#4c5a80"/>
<rect x="859" y="11" width="14" height="2" fill="#333848"/><rect x="859" y="11" width="2" height="14" fill="#333848"/>
<rect x="861" y="13" width="10" height="10" fill="#e8f0fa"/>
<rect x="873" y="12" width="1" height="14" fill="#ffffff" opacity="0.8"/><rect x="860" y="25" width="14" height="1" fill="#ffffff" opacity="0.8"/>
<path d="M862.3,14.3 L865.7,17.8 L862.3,21.3 M869.7,14.3 L866.3,17.8 L869.7,21.3" stroke="#0a0f18" stroke-width="1.3" fill="none"/>
<!-- menu bar -->
<rect x="7" y="31" width="871" height="22" fill="url(#mg)"/>
<rect x="7" y="52" width="871" height="1" fill="#f2f2f2"/>
<rect x="7" y="53" width="871" height="1" fill="#dcdcdc"/>
<text x="13.6" y="45.3" class="mn">Data</text>
<text x="52.0" y="45.3" class="mn">Options</text>
<!-- splitter -->
<rect x="188" y="54" width="10" height="543" fill="#eeeeee"/>
<rect x="193" y="58" width="1" height="1" fill="#555"/><rect x="195" y="60" width="1" height="1" fill="#555"/><rect x="193" y="62" width="1" height="1" fill="#555"/><rect x="195" y="64" width="1" height="1" fill="#555"/><rect x="193" y="66" width="1" height="1" fill="#555"/><rect x="195" y="68" width="1" height="1" fill="#555"/><rect x="193" y="70" width="1" height="1" fill="#555"/><rect x="195" y="72" width="1" height="1" fill="#555"/><rect x="193" y="74" width="1" height="1" fill="#555"/><rect x="195" y="76" width="1" height="1" fill="#555"/><rect x="193" y="78" width="1" height="1" fill="#555"/><rect x="195" y="80" width="1" height="1" fill="#555"/><rect x="193" y="82" width="1" height="1" fill="#555"/><rect x="195" y="84" width="1" height="1" fill="#555"/><rect x="193" y="86" width="1" height="1" fill="#555"/><rect x="195" y="88" width="1" height="1" fill="#555"/><rect x="193" y="90" width="1" height="1" fill="#555"/><rect x="195" y="92" width="1" height="1" fill="#555"/><rect x="193" y="94" width="1" height="1" fill="#555"/><rect x="195" y="96" width="1" height="1" fill="#555"/><rect x="193" y="98" width="1" height="1" fill="#555"/><rect x="195" y="100" width="1" height="1" fill="#555"/><rect x="193" y="102" width="1" height="1" fill="#555"/><rect x="195" y="104" width="1" height="1" fill="#555"/><rect x="193" y="106" width="1" height="1" fill="#555"/><rect x="195" y="108" width="1" height="1" fill="#555"/><rect x="193" y="110" width="1" height="1" fill="#555"/><rect x="195" y="112" width="1" height="1" fill="#555"/><rect x="193" y="114" width="1" height="1" fill="#555"/><rect x="195" y="116" width="1" height="1" fill="#555"/><rect x="193" y="118" width="1" height="1" fill="#555"/><rect x="195" y="120" width="1" height="1" fill="#555"/><rect x="193" y="122" width="1" height="1" fill="#555"/><rect x="195" y="124" width="1" height="1" fill="#555"/><rect x="193" y="126" width="1" height="1" fill="#555"/><rect x="195" y="128" width="1" height="1" fill="#555"/><rect x="193" y="130" width="1" height="1" fill="#555"/><rect x="195" y="132" width="1" height="1" fill="#555"/><rect x="193" y="134" width="1" height="1" fill="#555"/><rect x="195" y="136" width="1" height="1" fill="#555"/><rect x="193" y="138" width="1" height="1" fill="#555"/><rect x="195" y="140" width="1" height="1" fill="#555"/><rect x="193" y="142" width="1" height="1" fill="#555"/><rect x="195" y="144" width="1" height="1" fill="#555"/><rect x="193" y="146" width="1" height="1" fill="#555"/><rect x="195" y="148" width="1" height="1" fill="#555"/><rect x="193" y="150" width="1" height="1" fill="#555"/><rect x="195" y="152" width="1" height="1" fill="#555"/><rect x="193" y="154" width="1" height="1" fill="#555"/><rect x="195" y="156" width="1" height="1" fill="#555"/><rect x="193" y="158" width="1" height="1" fill="#555"/><rect x="195" y="160" width="1" height="1" fill="#555"/><rect x="193" y="162" width="1" height="1" fill="#555"/><rect x="195" y="164" width="1" height="1" fill="#555"/><rect x="193" y="166" width="1" height="1" fill="#555"/><rect x="195" y="168" width="1" height="1" fill="#555"/><rect x="193" y="170" width="1" height="1" fill="#555"/><rect x="195" y="172" width="1" height="1" fill="#555"/><rect x="193" y="174" width="1" height="1" fill="#555"/><rect x="195" y="176" width="1" height="1" fill="#555"/><rect x="193" y="178" width="1" height="1" fill="#555"/><rect x="195" y="180" width="1" height="1" fill="#555"/><rect x="193" y="182" width="1" height="1" fill="#555"/><rect x="195" y="184" width="1" height="1" fill="#555"/><rect x="193" y="186" width="1" height="1" fill="#555"/><rect x="195" y="188" width="1" height="1" fill="#555"/><rect x="193" y="190" width="1" height="1" fill="#555"/><rect x="195" y="192" width="1" height="1" fill="#555"/><rect x="193" y="194" width="1" height="1" fill="#555"/><rect x="195" y="196" width="1" height="1" fill="#555"/><rect x="193" y="198" width="1" height="1" fill="#555"/><rect x="195" y="200" width="1" height="1" fill="#555"/><rect x="193" y="202" width="1" height="1" fill="#555"/><rect x="195" y="204" width="1" height="1" fill="#555"/><rect x="193" y="206" width="1" height="1" fill="#555"/><rect x="195" y="208" width="1" height="1" fill="#555"/><rect x="193" y="210" width="1" height="1" fill="#555"/><rect x="195" y="212" width="1" height="1" fill="#555"/><rect x="193" y="214" width="1" height="1" fill="#555"/><rect x="195" y="216" width="1" height="1" fill="#555"/><rect x="193" y="218" width="1" height="1" fill="#555"/><rect x="195" y="220" width="1" height="1" fill="#555"/><rect x="193" y="222" width="1" height="1" fill="#555"/><rect x="195" y="224" width="1" height="1" fill="#555"/><rect x="193" y="226" width="1" height="1" fill="#555"/><rect x="195" y="228" width="1" height="1" fill="#555"/><rect x="193" y="230" width="1" height="1" fill="#555"/><rect x="195" y="232" width="1" height="1" fill="#555"/><rect x="193" y="234" width="1" height="1" fill="#555"/><rect x="195" y="236" width="1" height="1" fill="#555"/><rect x="193" y="238" width="1" height="1" fill="#555"/><rect x="195" y="240" width="1" height="1" fill="#555"/><rect x="193" y="242" width="1" height="1" fill="#555"/><rect x="195" y="244" width="1" height="1" fill="#555"/><rect x="193" y="246" width="1" height="1" fill="#555"/><rect x="195" y="248" width="1" height="1" fill="#555"/><rect x="193" y="250" width="1" height="1" fill="#555"/><rect x="195" y="252" width="1" height="1" fill="#555"/><rect x="193" y="254" width="1" height="1" fill="#555"/><rect x="195" y="256" width="1" height="1" fill="#555"/><rect x="193" y="258" width="1" height="1" fill="#555"/><rect x="195" y="260" width="1" height="1" fill="#555"/><rect x="193" y="262" width="1" height="1" fill="#555"/><rect x="195" y="264" width="1" height="1" fill="#555"/><rect x="193" y="266" width="1" height="1" fill="#555"/><rect x="195" y="268" width="1" height="1" fill="#555"/><rect x="193" y="270" width="1" height="1" fill="#555"/><rect x="195" y="272" width="1" height="1" fill="#555"/><rect x="193" y="274" width="1" height="1" fill="#555"/><rect x="195" y="276" width="1" height="1" fill="#555"/><rect x="193" y="278" width="1" height="1" fill="#555"/><rect x="195" y="280" width="1" height="1" fill="#555"/><rect x="193" y="282" width="1" height="1" fill="#555"/><rect x="195" y="284" width="1" height="1" fill="#555"/><rect x="193" y="286" width="1" height="1" fill="#555"/><rect x="195" y="288" width="1" height="1" fill="#555"/><rect x="193" y="290" width="1" height="1" fill="#555"/><rect x="195" y="292" width="1" height="1" fill="#555"/><rect x="193" y="294" width="1" height="1" fill="#555"/><rect x="195" y="296" width="1" height="1" fill="#555"/><rect x="193" y="298" width="1" height="1" fill="#555"/><rect x="195" y="300" width="1" height="1" fill="#555"/><rect x="193" y="302" width="1" height="1" fill="#555"/><rect x="195" y="304" width="1" height="1" fill="#555"/><rect x="193" y="306" width="1" height="1" fill="#555"/><rect x="195" y="308" width="1" height="1" fill="#555"/><rect x="193" y="310" width="1" height="1" fill="#555"/><rect x="195" y="312" width="1" height="1" fill="#555"/><rect x="193" y="314" width="1" height="1" fill="#555"/><rect x="195" y="316" width="1" height="1" fill="#555"/><rect x="193" y="318" width="1" height="1" fill="#555"/><rect x="195" y="320" width="1" height="1" fill="#555"/><rect x="193" y="322" width="1" height="1" fill="#555"/><rect x="195" y="324" width="1" height="1" fill="#555"/><rect x="193" y="326" width="1" height="1" fill="#555"/><rect x="195" y="328" width="1" height="1" fill="#555"/><rect x="193" y="330" width="1" height="1" fill="#555"/><rect x="195" y="332" width="1" height="1" fill="#555"/><rect x="193" y="334" width="1" height="1" fill="#555"/><rect x="195" y="336" width="1" height="1" fill="#555"/><rect x="193" y="338" width="1" height="1" fill="#555"/><rect x="195" y="340" width="1" height="1" fill="#555"/><rect x="193" y="342" width="1" height="1" fill="#555"/><rect x="195" y="344" width="1" height="1" fill="#555"/><rect x="193" y="346" width="1" height="1" fill="#555"/><rect x="195" y="348" width="1" height="1" fill="#555"/><rect x="193" y="350" width="1" height="1" fill="#555"/><rect x="195" y="352" width="1" height="1" fill="#555"/><rect x="193" y="354" width="1" height="1" fill="#555"/><rect x="195" y="356" width="1" height="1" fill="#555"/><rect x="193" y="358" width="1" height="1" fill="#555"/><rect x="195" y="360" width="1" height="1" fill="#555"/><rect x="193" y="362" width="1" height="1" fill="#555"/><rect x="195" y="364" width="1" height="1" fill="#555"/><rect x="193" y="366" width="1" height="1" fill="#555"/><rect x="195" y="368" width="1" height="1" fill="#555"/><rect x="193" y="370" width="1" height="1" fill="#555"/><rect x="195" y="372" width="1" height="1" fill="#555"/><rect x="193" y="374" width="1" height="1" fill="#555"/><rect x="195" y="376" width="1" height="1" fill="#555"/><rect x="193" y="378" width="1" height="1" fill="#555"/><rect x="195" y="380" width="1" height="1" fill="#555"/><rect x="193" y="382" width="1" height="1" fill="#555"/><rect x="195" y="384" width="1" height="1" fill="#555"/><rect x="193" y="386" width="1" height="1" fill="#555"/><rect x="195" y="388" width="1" height="1" fill="#555"/><rect x="193" y="390" width="1" height="1" fill="#555"/><rect x="195" y="392" width="1" height="1" fill="#555"/><rect x="193" y="394" width="1" height="1" fill="#555"/><rect x="195" y="396" width="1" height="1" fill="#555"/><rect x="193" y="398" width="1" height="1" fill="#555"/><rect x="195" y="400" width="1" height="1" fill="#555"/><rect x="193" y="402" width="1" height="1" fill="#555"/><rect x="195" y="404" width="1" height="1" fill="#555"/><rect x="193" y="406" width="1" height="1" fill="#555"/><rect x="195" y="408" width="1" height="1" fill="#555"/><rect x="193" y="410" width="1" height="1" fill="#555"/><rect x="195" y="412" width="1" height="1" fill="#555"/><rect x="193" y="414" width="1" height="1" fill="#555"/><rect x="195" y="416" width="1" height="1" fill="#555"/><rect x="193" y="418" width="1" height="1" fill="#555"/><rect x="195" y="420" width="1" height="1" fill="#555"/><rect x="193" y="422" width="1" height="1" fill="#555"/><rect x="195" y="424" width="1" height="1" fill="#555"/><rect x="193" y="426" width="1" height="1" fill="#555"/><rect x="195" y="428" width="1" height="1" fill="#555"/><rect x="193" y="430" width="1" height="1" fill="#555"/><rect x="195" y="432" width="1" height="1" fill="#555"/><rect x="193" y="434" width="1" height="1" fill="#555"/><rect x="195" y="436" width="1" height="1" fill="#555"/><rect x="193" y="438" width="1" height="1" fill="#555"/><rect x="195" y="440" width="1" height="1" fill="#555"/><rect x="193" y="442" width="1" height="1" fill="#555"/><rect x="195" y="444" width="1" height="1" fill="#555"/><rect x="193" y="446" width="1" height="1" fill="#555"/><rect x="195" y="448" width="1" height="1" fill="#555"/><rect x="193" y="450" width="1" height="1" fill="#555"/><rect x="195" y="452" width="1" height="1" fill="#555"/><rect x="193" y="454" width="1" height="1" fill="#555"/><rect x="195" y="456" width="1" height="1" fill="#555"/><rect x="193" y="458" width="1" height="1" fill="#555"/><rect x="195" y="460" width="1" height="1" fill="#555"/><rect x="193" y="462" width="1" height="1" fill="#555"/><rect x="195" y="464" width="1" height="1" fill="#555"/><rect x="193" y="466" width="1" height="1" fill="#555"/><rect x="195" y="468" width="1" height="1" fill="#555"/><rect x="193" y="470" width="1" height="1" fill="#555"/><rect x="195" y="472" width="1" height="1" fill="#555"/><rect x="193" y="474" width="1" height="1" fill="#555"/><rect x="195" y="476" width="1" height="1" fill="#555"/><rect x="193" y="478" width="1" height="1" fill="#555"/><rect x="195" y="480" width="1" height="1" fill="#555"/><rect x="193" y="482" width="1" height="1" fill="#555"/><rect x="195" y="484" width="1" height="1" fill="#555"/><rect x="193" y="486" width="1" height="1" fill="#555"/><rect x="195" y="488" width="1" height="1" fill="#555"/><rect x="193" y="490" width="1" height="1" fill="#555"/><rect x="195" y="492" width="1" height="1" fill="#555"/><rect x="193" y="494" width="1" height="1" fill="#555"/><rect x="195" y="496" width="1" height="1" fill="#555"/><rect x="193" y="498" width="1" height="1" fill="#555"/><rect x="195" y="500" width="1" height="1" fill="#555"/><rect x="193" y="502" width="1" height="1" fill="#555"/><rect x="195" y="504" width="1" height="1" fill="#555"/><rect x="193" y="506" width="1" height="1" fill="#555"/><rect x="195" y="508" width="1" height="1" fill="#555"/><rect x="193" y="510" width="1" height="1" fill="#555"/><rect x="195" y="512" width="1" height="1" fill="#555"/><rect x="193" y="514" width="1" height="1" fill="#555"/><rect x="195" y="516" width="1" height="1" fill="#555"/><rect x="193" y="518" width="1" height="1" fill="#555"/><rect x="195" y="520" width="1" height="1" fill="#555"/><rect x="193" y="522" width="1" height="1" fill="#555"/><rect x="195" y="524" width="1" height="1" fill="#555"/><rect x="193" y="526" width="1" height="1" fill="#555"/><rect x="195" y="528" width="1" height="1" fill="#555"/><rect x="193" y="530" width="1" height="1" fill="#555"/><rect x="195" y="532" width="1" height="1" fill="#555"/><rect x="193" y="534" width="1" height="1" fill="#555"/><rect x="195" y="536" width="1" height="1" fill="#555"/><rect x="193" y="538" width="1" height="1" fill="#555"/><rect x="195" y="540" width="1" height="1" fill="#555"/><rect x="193" y="542" width="1" height="1" fill="#555"/><rect x="195" y="544" width="1" height="1" fill="#555"/><rect x="193" y="546" width="1" height="1" fill="#555"/><rect x="195" y="548" width="1" height="1" fill="#555"/><rect x="193" y="550" width="1" height="1" fill="#555"/><rect x="195" y="552" width="1" height="1" fill="#555"/><rect x="193" y="554" width="1" height="1" fill="#555"/><rect x="195" y="556" width="1" height="1" fill="#555"/><rect x="193" y="558" width="1" height="1" fill="#555"/><rect x="195" y="560" width="1" height="1" fill="#555"/><rect x="193" y="562" width="1" height="1" fill="#555"/><rect x="195" y="564" width="1" height="1" fill="#555"/><rect x="193" y="566" width="1" height="1" fill="#555"/><rect x="195" y="568" width="1" height="1" fill="#555"/><rect x="193" y="570" width="1" height="1" fill="#555"/><rect x="195" y="572" width="1" height="1" fill="#555"/><rect x="193" y="574" width="1" height="1" fill="#555"/><rect x="195" y="576" width="1" height="1" fill="#555"/><rect x="193" y="578" width="1" height="1" fill="#555"/><rect x="195" y="580" width="1" height="1" fill="#555"/><rect x="193" y="582" width="1" height="1" fill="#555"/><rect x="195" y="584" width="1" height="1" fill="#555"/><rect x="193" y="586" width="1" height="1" fill="#555"/><rect x="195" y="588" width="1" height="1" fill="#555"/><rect x="193" y="590" width="1" height="1" fill="#555"/><rect x="195" y="592" width="1" height="1" fill="#555"/>
<!-- tree panel -->
<rect x="7" y="54" width="1" height="543" fill="#7080a0"/>
<rect x="7" y="54" width="181" height="516" fill="#7080a0"/>
<rect x="8" y="54" width="180" height="516" fill="#7a8a99"/>
<rect x="9" y="55" width="178" height="514" fill="#ffffff"/>
<rect x="8" y="570" width="180" height="1" fill="#ffffff"/>
<line x1="16.5" y1="74" x2="16.5" y2="242.5" stroke="#c2cee0" stroke-width="1"/>
<line x1="17" y1="84.5" x2="26" y2="84.5" stroke="#c2cee0" stroke-width="1"/>
<line x1="17" y1="122.5" x2="26" y2="122.5" stroke="#c2cee0" stroke-width="1"/>
<line x1="17" y1="142.5" x2="26" y2="142.5" stroke="#c2cee0" stroke-width="1"/>
<line x1="17" y1="162.5" x2="26" y2="162.5" stroke="#c2cee0" stroke-width="1"/>
<line x1="17" y1="182.5" x2="26" y2="182.5" stroke="#c2cee0" stroke-width="1"/>
<line x1="17" y1="202.5" x2="26" y2="202.5" stroke="#c2cee0" stroke-width="1"/>
<line x1="17" y1="222.5" x2="26" y2="222.5" stroke="#c2cee0" stroke-width="1"/>
<line x1="17" y1="242.5" x2="26" y2="242.5" stroke="#c2cee0" stroke-width="1"/>
<rect x="9.5" y="61.5" width="15" height="10" fill="url(#fg)" stroke="#1e1e2a" stroke-width="1"/><path d="M18,61 L19,59 H25 V62 H18 Z" fill="#6382bf"/>
<text x="29.5" y="69.6" class="tr">kSar</text>
<path d="M32,77 H40 L43,80 V91 H32 Z" fill="#fff" stroke="#dce8f6" stroke-width="1"/><path d="M31.5,76.5 H40.3 L43.5,81.2 V91.5 H31.5 Z" fill="none" stroke="#385a84" stroke-width="1.1"/><path d="M39,78 L42.5,82" stroke="#385a84" stroke-width="0.9" stroke-dasharray="1,0.7"/>
<text x="49.5" y="88.4" class="tr">CPU</text>
<rect x="29.5" y="99.5" width="15" height="10" fill="url(#fg)" stroke="#1e1e2a" stroke-width="1"/><path d="M38,99 L39,97 H45 V100 H38 Z" fill="#6382bf"/>
<text x="49.5" y="107.5" class="tr">Disk</text>
<path d="M32,115 H40 L43,118 V129 H32 Z" fill="#fff" stroke="#dce8f6" stroke-width="1"/><path d="M31.5,114.5 H40.3 L43.5,119.2 V129.5 H31.5 Z" fill="none" stroke="#385a84" stroke-width="1.1"/><path d="M39,116 L42.5,120" stroke="#385a84" stroke-width="0.9" stroke-dasharray="1,0.7"/>
<text x="49.5" y="126.6" class="tr">Run Queue</text>
<path d="M32,135 H40 L43,138 V149 H32 Z" fill="#fff" stroke="#dce8f6" stroke-width="1"/><path d="M31.5,134.5 H40.3 L43.5,139.2 V149.5 H31.5 Z" fill="none" stroke="#385a84" stroke-width="1.1"/><path d="M39,136 L42.5,140" stroke="#385a84" stroke-width="0.9" stroke-dasharray="1,0.7"/>
<text x="49.5" y="146.5" class="tr">Swap queue</text>
<path d="M32,155 H40 L43,158 V169 H32 Z" fill="#fff" stroke="#dce8f6" stroke-width="1"/><path d="M31.5,154.5 H40.3 L43.5,159.2 V169.5 H31.5 Z" fill="none" stroke="#385a84" stroke-width="1.1"/><path d="M39,156 L42.5,160" stroke="#385a84" stroke-width="0.9" stroke-dasharray="1,0.7"/>
<text x="49.5" y="166.4" class="tr">Buffers</text>
<path d="M32,175 H40 L43,178 V189 H32 Z" fill="#fff" stroke="#dce8f6" stroke-width="1"/><path d="M31.5,174.5 H40.3 L43.5,179.2 V189.5 H31.5 Z" fill="none" stroke="#385a84" stroke-width="1.1"/><path d="M39,176 L42.5,180" stroke="#385a84" stroke-width="0.9" stroke-dasharray="1,0.7"/>
<text x="49.5" y="186.3" class="tr">Swapping</text>
<path d="M32,195 H40 L43,198 V209 H32 Z" fill="#fff" stroke="#dce8f6" stroke-width="1"/><path d="M31.5,194.5 H40.3 L43.5,199.2 V209.5 H31.5 Z" fill="none" stroke="#385a84" stroke-width="1.1"/><path d="M39,196 L42.5,200" stroke="#385a84" stroke-width="0.9" stroke-dasharray="1,0.7"/>
<rect x="48.5" y="192.5" width="49" height="19" fill="#b8cfe5" stroke="#8fb0d2" stroke-width="1"/>
<text x="49.5" y="206.3" class="tr">Syscalls</text>
<path d="M32,215 H40 L43,218 V229 H32 Z" fill="#fff" stroke="#dce8f6" stroke-width="1"/><path d="M31.5,214.5 H40.3 L43.5,219.2 V229.5 H31.5 Z" fill="none" stroke="#385a84" stroke-width="1.1"/><path d="M39,216 L42.5,220" stroke="#385a84" stroke-width="0.9" stroke-dasharray="1,0.7"/>
<text x="49.5" y="226.3" class="tr">File</text>
<path d="M32,235 H40 L43,238 V249 H32 Z" fill="#fff" stroke="#dce8f6" stroke-width="1"/><path d="M31.5,234.5 H40.3 L43.5,239.2 V249.5 H31.5 Z" fill="none" stroke="#385a84" stroke-width="1.1"/><path d="M39,236 L42.5,240" stroke="#385a84" stroke-width="0.9" stroke-dasharray="1,0.7"/>
<text x="49.5" y="246.2" class="tr">Tty</text>
<line x1="19" y1="103" x2="24" y2="103" stroke="#5a76b4" stroke-width="2"/>
<circle cx="16.7" cy="102.9" r="2.2" fill="#fff" stroke="#5a76b4" stroke-width="2"/>
<!-- redo button -->
<rect x="8.5" y="571.5" width="180" height="25" fill="url(#bg)" stroke="#7a8a99" stroke-width="1"/>
<text x="84.6" y="588.6" class="mn" style="font-size:11.25px">Redo</text>
<rect x="7" y="597" width="871" height="1" fill="#ffffff"/>
<!-- chart panel -->
<rect x="198" y="54" width="1" height="543" fill="#7a8a99"/>
<rect x="198" y="54" width="680" height="1" fill="#7a8a99"/>
<rect x="199" y="55" width="1" height="542" fill="#ffffff"/>
<rect x="199" y="55" width="679" height="1" fill="#ffffff"/>
<rect x="877" y="55" width="1" height="543" fill="#ffffff"/>
<rect x="203" y="59" width="670" height="534" fill="#ffffff"/>
<text x="537.9" y="77.6" text-anchor="middle" class="ttl">Syscalls for UXAN</text>
<line x1="338.5" y1="87" x2="338.5" y2="198" stroke="#dedede" stroke-width="1" stroke-dasharray="2,2"/>
<line x1="388.5" y1="87" x2="388.5" y2="198" stroke="#dedede" stroke-width="1" stroke-dasharray="2,2"/>
<line x1="438.5" y1="87" x2="438.5" y2="198" stroke="#dedede" stroke-width="1" stroke-dasharray="2,2"/>
<line x1="488.5" y1="87" x2="488.5" y2="198" stroke="#dedede" stroke-width="1" stroke-dasharray="2,2"/>
<line x1="538.5" y1="87" x2="538.5" y2="198" stroke="#dedede" stroke-width="1" stroke-dasharray="2,2"/>
<line x1="589.5" y1="87" x2="589.5" y2="198" stroke="#dedede" stroke-width="1" stroke-dasharray="2,2"/>
<line x1="639.5" y1="87" x2="639.5" y2="198" stroke="#dedede" stroke-width="1" stroke-dasharray="2,2"/>
<line x1="689.5" y1="87" x2="689.5" y2="198" stroke="#dedede" stroke-width="1" stroke-dasharray="2,2"/>
<line x1="739.5" y1="87" x2="739.5" y2="198" stroke="#dedede" stroke-width="1" stroke-dasharray="2,2"/>
<line x1="789.5" y1="87" x2="789.5" y2="198" stroke="#dedede" stroke-width="1" stroke-dasharray="2,2"/>
<line x1="839.5" y1="87" x2="839.5" y2="198" stroke="#dedede" stroke-width="1" stroke-dasharray="2,2"/>
<line x1="288" y1="89.5" x2="865" y2="89.5" stroke="#dedede" stroke-width="1" stroke-dasharray="2,2"/>
<line x1="288" y1="116.5" x2="865" y2="116.5" stroke="#dedede" stroke-width="1" stroke-dasharray="2,2"/>
<line x1="288" y1="143.5" x2="865" y2="143.5" stroke="#dedede" stroke-width="1" stroke-dasharray="2,2"/>
<line x1="288" y1="171.5" x2="865" y2="171.5" stroke="#dedede" stroke-width="1" stroke-dasharray="2,2"/>
<rect x="288.5" y="87.5" width="577" height="111" fill="none" stroke="#a8a8a8" stroke-width="1"/>
<line x1="288.5" y1="87" x2="288.5" y2="199" stroke="#808080" stroke-width="1"/>
<line x1="286" y1="89.5" x2="288" y2="89.5" stroke="#808080" stroke-width="1"/>
<text transform="translate(281.5,93.30) scale(1,0.93)" text-anchor="end" class="tk">20,000</text>
<line x1="286" y1="116.5" x2="288" y2="116.5" stroke="#808080" stroke-width="1"/>
<text transform="translate(281.5,120.55) scale(1,0.93)" text-anchor="end" class="tk">15,000</text>
<line x1="286" y1="143.5" x2="288" y2="143.5" stroke="#808080" stroke-width="1"/>
<text transform="translate(281.5,147.80) scale(1,0.93)" text-anchor="end" class="tk">10,000</text>
<line x1="286" y1="171.5" x2="288" y2="171.5" stroke="#808080" stroke-width="1"/>
<text transform="translate(281.5,175.05) scale(1,0.93)" text-anchor="end" class="tk">5,000</text>
<line x1="286" y1="198.5" x2="288" y2="198.5" stroke="#808080" stroke-width="1"/>
<text transform="translate(281.5,203.20) scale(1,0.93)" text-anchor="end" class="tk">0</text>
<text transform="translate(241.5,143.0) rotate(-90)" text-anchor="middle" class="yl">read/write /s</text>
<line x1="338.5" y1="203" x2="338.5" y2="314" stroke="#dedede" stroke-width="1" stroke-dasharray="2,2"/>
<line x1="388.5" y1="203" x2="388.5" y2="314" stroke="#dedede" stroke-width="1" stroke-dasharray="2,2"/>
<line x1="438.5" y1="203" x2="438.5" y2="314" stroke="#dedede" stroke-width="1" stroke-dasharray="2,2"/>
<line x1="488.5" y1="203" x2="488.5" y2="314" stroke="#dedede" stroke-width="1" stroke-dasharray="2,2"/>
<line x1="538.5" y1="203" x2="538.5" y2="314" stroke="#dedede" stroke-width="1" stroke-dasharray="2,2"/>
<line x1="589.5" y1="203" x2="589.5" y2="314" stroke="#dedede" stroke-width="1" stroke-dasharray="2,2"/>
<line x1="639.5" y1="203" x2="639.5" y2="314" stroke="#dedede" stroke-width="1" stroke-dasharray="2,2"/>
<line x1="689.5" y1="203" x2="689.5" y2="314" stroke="#dedede" stroke-width="1" stroke-dasharray="2,2"/>
<line x1="739.5" y1="203" x2="739.5" y2="314" stroke="#dedede" stroke-width="1" stroke-dasharray="2,2"/>
<line x1="789.5" y1="203" x2="789.5" y2="314" stroke="#dedede" stroke-width="1" stroke-dasharray="2,2"/>
<line x1="839.5" y1="203" x2="839.5" y2="314" stroke="#dedede" stroke-width="1" stroke-dasharray="2,2"/>
<line x1="288" y1="210.5" x2="865" y2="210.5" stroke="#dedede" stroke-width="1" stroke-dasharray="2,2"/>
<line x1="288" y1="245.5" x2="865" y2="245.5" stroke="#dedede" stroke-width="1" stroke-dasharray="2,2"/>
<line x1="288" y1="280.5" x2="865" y2="280.5" stroke="#dedede" stroke-width="1" stroke-dasharray="2,2"/>
<rect x="288.5" y="203.5" width="577" height="111" fill="none" stroke="#a8a8a8" stroke-width="1"/>
<line x1="288.5" y1="203" x2="288.5" y2="315" stroke="#808080" stroke-width="1"/>
<line x1="286" y1="210.5" x2="288" y2="210.5" stroke="#808080" stroke-width="1"/>
<text transform="translate(281.5,214.40) scale(1,0.93)" text-anchor="end" class="tk">75,000</text>
<line x1="286" y1="245.5" x2="288" y2="245.5" stroke="#808080" stroke-width="1"/>
<text transform="translate(281.5,249.30) scale(1,0.93)" text-anchor="end" class="tk">50,000</text>
<line x1="286" y1="280.5" x2="288" y2="280.5" stroke="#808080" stroke-width="1"/>
<text transform="translate(281.5,284.10) scale(1,0.93)" text-anchor="end" class="tk">25,000</text>
<line x1="286" y1="314.5" x2="288" y2="314.5" stroke="#808080" stroke-width="1"/>
<text transform="translate(281.5,318.90) scale(1,0.93)" text-anchor="end" class="tk">0</text>
<text transform="translate(241.5,257.5) rotate(-90)" text-anchor="middle" class="yl">syscall/s</text>
<line x1="338.5" y1="319" x2="338.5" y2="431" stroke="#dedede" stroke-width="1" stroke-dasharray="2,2"/>
<line x1="388.5" y1="319" x2="388.5" y2="431" stroke="#dedede" stroke-width="1" stroke-dasharray="2,2"/>
<line x1="438.5" y1="319" x2="438.5" y2="431" stroke="#dedede" stroke-width="1" stroke-dasharray="2,2"/>
<line x1="488.5" y1="319" x2="488.5" y2="431" stroke="#dedede" stroke-width="1" stroke-dasharray="2,2"/>
<line x1="538.5" y1="319" x2="538.5" y2="431" stroke="#dedede" stroke-width="1" stroke-dasharray="2,2"/>
<line x1="589.5" y1="319" x2="589.5" y2="431" stroke="#dedede" stroke-width="1" stroke-dasharray="2,2"/>
<line x1="639.5" y1="319" x2="639.5" y2="431" stroke="#dedede" stroke-width="1" stroke-dasharray="2,2"/>
<line x1="689.5" y1="319" x2="689.5" y2="431" stroke="#dedede" stroke-width="1" stroke-dasharray="2,2"/>
<line x1="739.5" y1="319" x2="739.5" y2="431" stroke="#dedede" stroke-width="1" stroke-dasharray="2,2"/>
<line x1="789.5" y1="319" x2="789.5" y2="431" stroke="#dedede" stroke-width="1" stroke-dasharray="2,2"/>
<line x1="839.5" y1="319" x2="839.5" y2="431" stroke="#dedede" stroke-width="1" stroke-dasharray="2,2"/>
<line x1="288" y1="330.5" x2="865" y2="330.5" stroke="#dedede" stroke-width="1" stroke-dasharray="2,2"/>
<line x1="288" y1="355.5" x2="865" y2="355.5" stroke="#dedede" stroke-width="1" stroke-dasharray="2,2"/>
<line x1="288" y1="380.5" x2="865" y2="380.5" stroke="#dedede" stroke-width="1" stroke-dasharray="2,2"/>
<line x1="288" y1="406.5" x2="865" y2="406.5" stroke="#dedede" stroke-width="1" stroke-dasharray="2,2"/>
<rect x="288.5" y="319.5" width="577" height="112" fill="none" stroke="#a8a8a8" stroke-width="1"/>
<line x1="288.5" y1="319" x2="288.5" y2="432" stroke="#808080" stroke-width="1"/>
<line x1="286" y1="330.5" x2="288" y2="330.5" stroke="#808080" stroke-width="1"/>
<text transform="translate(281.5,334.20) scale(1,0.93)" text-anchor="end" class="tk">40</text>
<line x1="286" y1="355.5" x2="288" y2="355.5" stroke="#808080" stroke-width="1"/>
<text transform="translate(281.5,359.40) scale(1,0.93)" text-anchor="end" class="tk">30</text>
<line x1="286" y1="380.5" x2="288" y2="380.5" stroke="#808080" stroke-width="1"/>
<text transform="translate(281.5,384.50) scale(1,0.93)" text-anchor="end" class="tk">20</text>
<line x1="286" y1="406.5" x2="288" y2="406.5" stroke="#808080" stroke-width="1"/>
<text transform="translate(281.5,410.00) scale(1,0.93)" text-anchor="end" class="tk">10</text>
<line x1="286" y1="431.5" x2="288" y2="431.5" stroke="#808080" stroke-width="1"/>
<text transform="translate(281.5,434.50) scale(1,0.93)" text-anchor="end" class="tk">0</text>
<text transform="translate(263.3,375.5) rotate(-90)" text-anchor="middle" class="yl">fork/exec /s</text>
<line x1="338.5" y1="436" x2="338.5" y2="547" stroke="#dedede" stroke-width="1" stroke-dasharray="2,2"/>
<line x1="388.5" y1="436" x2="388.5" y2="547" stroke="#dedede" stroke-width="1" stroke-dasharray="2,2"/>
<line x1="438.5" y1="436" x2="438.5" y2="547" stroke="#dedede" stroke-width="1" stroke-dasharray="2,2"/>
<line x1="488.5" y1="436" x2="488.5" y2="547" stroke="#dedede" stroke-width="1" stroke-dasharray="2,2"/>
<line x1="538.5" y1="436" x2="538.5" y2="547" stroke="#dedede" stroke-width="1" stroke-dasharray="2,2"/>
<line x1="589.5" y1="436" x2="589.5" y2="547" stroke="#dedede" stroke-width="1" stroke-dasharray="2,2"/>
<line x1="639.5" y1="436" x2="639.5" y2="547" stroke="#dedede" stroke-width="1" stroke-dasharray="2,2"/>
<line x1="689.5" y1="436" x2="689.5" y2="547" stroke="#dedede" stroke-width="1" stroke-dasharray="2,2"/>
<line x1="739.5" y1="436" x2="739.5" y2="547" stroke="#dedede" stroke-width="1" stroke-dasharray="2,2"/>
<line x1="789.5" y1="436" x2="789.5" y2="547" stroke="#dedede" stroke-width="1" stroke-dasharray="2,2"/>
<line x1="839.5" y1="436" x2="839.5" y2="547" stroke="#dedede" stroke-width="1" stroke-dasharray="2,2"/>
<line x1="288" y1="453.5" x2="865" y2="453.5" stroke="#dedede" stroke-width="1" stroke-dasharray="2,2"/>
<line x1="288" y1="485.5" x2="865" y2="485.5" stroke="#dedede" stroke-width="1" stroke-dasharray="2,2"/>
<line x1="288" y1="516.5" x2="865" y2="516.5" stroke="#dedede" stroke-width="1" stroke-dasharray="2,2"/>
<rect x="288.5" y="436.5" width="577" height="111" fill="none" stroke="#a8a8a8" stroke-width="1"/>
<line x1="288.5" y1="436" x2="288.5" y2="548" stroke="#808080" stroke-width="1"/>
<line x1="286" y1="453.5" x2="288" y2="453.5" stroke="#808080" stroke-width="1"/>
<text transform="translate(281.5,457.30) scale(1,0.93)" text-anchor="end" class="tk">3,000,000</text>
<line x1="286" y1="485.5" x2="288" y2="485.5" stroke="#808080" stroke-width="1"/>
<text transform="translate(281.5,489.10) scale(1,0.93)" text-anchor="end" class="tk">2,000,000</text>
<line x1="286" y1="516.5" x2="288" y2="516.5" stroke="#808080" stroke-width="1"/>
<text transform="translate(281.5,520.30) scale(1,0.93)" text-anchor="end" class="tk">1,000,000</text>
<line x1="286" y1="547.5" x2="288" y2="547.5" stroke="#808080" stroke-width="1"/>
<text transform="translate(281.5,551.50) scale(1,0.93)" text-anchor="end" class="tk">0</text>
<text transform="translate(227.6,492.0) rotate(-90)" text-anchor="middle" class="yl">rchar/wchar /s</text>
<line x1="288" y1="547.5" x2="866" y2="547.5" stroke="#808080" stroke-width="1"/>
<line x1="338.5" y1="548" x2="338.5" y2="550" stroke="#808080" stroke-width="1"/>
<text transform="translate(338.50,561.3) scale(1,0.93)" text-anchor="middle" class="tk">02:00</text>
<line x1="388.5" y1="548" x2="388.5" y2="550" stroke="#808080" stroke-width="1"/>
<text transform="translate(388.60,561.3) scale(1,0.93)" text-anchor="middle" class="tk">04:00</text>
<line x1="438.5" y1="548" x2="438.5" y2="550" stroke="#808080" stroke-width="1"/>
<text transform="translate(438.70,561.3) scale(1,0.93)" text-anchor="middle" class="tk">06:00</text>
<line x1="488.5" y1="548" x2="488.5" y2="550" stroke="#808080" stroke-width="1"/>
<text transform="translate(488.80,561.3) scale(1,0.93)" text-anchor="middle" class="tk">08:00</text>
<line x1="538.5" y1="548" x2="538.5" y2="550" stroke="#808080" stroke-width="1"/>
<text transform="translate(538.90,561.3) scale(1,0.93)" text-anchor="middle" class="tk">10:00</text>
<line x1="589.5" y1="548" x2="589.5" y2="550" stroke="#808080" stroke-width="1"/>
<text transform="translate(589.00,561.3) scale(1,0.93)" text-anchor="middle" class="tk">12:00</text>
<line x1="639.5" y1="548" x2="639.5" y2="550" stroke="#808080" stroke-width="1"/>
<text transform="translate(639.10,561.3) scale(1,0.93)" text-anchor="middle" class="tk">14:00</text>
<line x1="689.5" y1="548" x2="689.5" y2="550" stroke="#808080" stroke-width="1"/>
<text transform="translate(689.20,561.3) scale(1,0.93)" text-anchor="middle" class="tk">16:00</text>
<line x1="739.5" y1="548" x2="739.5" y2="550" stroke="#808080" stroke-width="1"/>
<text transform="translate(739.30,561.3) scale(1,0.93)" text-anchor="middle" class="tk">18:00</text>
<line x1="789.5" y1="548" x2="789.5" y2="550" stroke="#808080" stroke-width="1"/>
<text transform="translate(789.40,561.3) scale(1,0.93)" text-anchor="middle" class="tk">20:00</text>
<line x1="839.5" y1="548" x2="839.5" y2="550" stroke="#808080" stroke-width="1"/>
<text transform="translate(839.50,561.3) scale(1,0.93)" text-anchor="middle" class="tk">22:00</text>
<g clip-path="url(#pc1)"><polyline points="313.4,163.5 338.5,148.4 363.5,174.5 388.6,186.4 413.6,186.4 438.7,195.1 463.8,195.1 488.8,195.1 497.1,167.2 505.5,190.0 513.9,194.4 522.2,193.2 530.5,193.2 538.9,193.2 547.2,194.4 555.6,194.4 564.0,194.4 572.3,194.4 580.6,194.4 589.0,194.4 597.3,193.2 605.7,194.4 614.0,194.4 622.4,193.2 630.8,193.2 639.1,193.2 647.4,193.2 655.8,193.2 664.1,194.4 672.5,193.2 680.9,193.2 689.2,194.4 697.6,194.4 705.9,194.4 714.2,194.4 722.6,194.4 730.9,194.4 739.3,194.3 764.3,192.2 789.4,186.3 814.5,193.5 839.5,179.3 864.5,193.7" fill="none" stroke="#38d838" stroke-width="1.25" stroke-linejoin="miter"/><polyline points="313.4,121.5 338.5,109.1 363.5,134.5 388.6,145.2 413.6,146.4 438.7,156.6 463.8,138.2 488.8,139.2 497.1,92.2 505.5,137.4 513.9,140.2 522.2,125.3 530.5,140.4 538.9,141.4 547.2,127.1 555.6,141.2 564.0,142.3 572.3,125.3 580.6,142.3 589.0,142.3 597.3,126.2 605.7,141.4 614.0,140.2 622.4,125.3 630.8,141.4 639.1,141.4 647.4,125.3 655.8,141.4 664.1,141.4 672.5,125.3 680.9,139.3 689.2,142.3 697.6,126.2 705.9,142.3 714.2,142.3 722.6,126.2 730.9,142.3 739.3,143.5 764.3,133.0 789.4,127.3 814.5,136.2 839.5,122.4 864.5,128.6" fill="none" stroke="#2626a0" stroke-width="1.25" stroke-linejoin="miter"/></g>
<g clip-path="url(#pc2)"><polyline points="313.4,231.6 338.5,221.1 363.5,249.2 388.6,254.2 413.6,259.2 438.7,276.6 463.8,266.4 488.8,266.4 497.1,230.3 505.5,260.7 513.9,234.8 522.2,208.9 530.5,233.6 538.9,258.3 547.2,258.3 555.6,266.3 564.0,266.3 572.3,245.4 580.6,253.2 589.0,266.2 597.3,257.1 605.7,265.3 614.0,245.2 622.4,246.2 630.8,263.3 639.1,265.3 647.4,255.5 655.8,265.3 664.1,265.3 672.5,256.5 680.9,264.3 689.2,266.2 697.6,257.5 705.9,266.2 714.2,267.2 722.6,258.4 730.9,267.2 739.3,267.2 764.3,227.3 789.4,228.4 814.5,241.3 839.5,232.1 864.5,220.8" fill="none" stroke="#c82828" stroke-width="1.25" stroke-linejoin="miter"/></g>
<g clip-path="url(#pc3)"><polyline points="313.4,406.5 338.5,395.3 363.5,404.2 388.6,402.3 413.6,392.3 438.7,402.3 463.8,372.4 488.8,372.5 497.1,349.3 505.5,378.3 513.9,382.2 522.2,358.5 530.5,380.3 538.9,380.3 547.2,357.3 555.6,379.3 564.0,379.3 572.3,357.3 580.6,382.2 589.0,378.3 597.3,356.3 605.7,379.3 614.0,378.3 622.4,357.3 630.8,381.3 639.1,380.3 647.4,355.4 655.8,378.3 664.1,379.3 672.5,357.3 680.9,379.3 689.2,380.3 697.6,357.3 705.9,378.3 714.2,380.3 722.6,358.5 730.9,380.3 739.3,380.3 764.3,373.0 789.4,372.5 814.5,374.4 839.5,373.0 864.5,381.6" fill="none" stroke="#e034e8" stroke-width="1.25" stroke-linejoin="miter"/><polyline points="313.4,391.3 338.5,380.1 363.5,384.4 388.6,381.4 413.6,367.2 438.7,377.1 463.8,349.1 488.8,349.1 497.1,325.2 505.5,355.9 513.9,361.2 522.2,337.0 530.5,357.3 538.9,357.3 547.2,334.1 555.6,355.4 564.0,355.4 572.3,334.1 580.6,360.4 589.0,354.4 597.3,332.2 605.7,355.4 614.0,355.4 622.4,333.1 630.8,359.2 639.1,357.3 647.4,332.2 655.8,354.4 664.1,355.4 672.5,333.1 680.9,356.3 689.2,356.3 697.6,334.1 705.9,354.4 714.2,356.3 722.6,335.1 730.9,356.3 739.3,356.3 764.3,350.5 789.4,350.5 814.5,352.4 839.5,351.4 864.5,365.6" fill="none" stroke="#141414" stroke-width="1.25" stroke-linejoin="miter"/></g>
<g clip-path="url(#pc4)"><polyline points="313.4,514.3 338.5,525.5 363.5,513.8 388.6,527.0 413.6,540.4 438.7,532.4 463.8,513.0 488.8,512.7 497.1,463.2 505.5,485.5 513.9,538.7 522.2,502.2 530.5,469.3 538.9,502.2 547.2,489.5 555.6,506.7 564.0,506.6 572.3,441.2 580.6,510.9 589.0,512.5 597.3,502.2 605.7,501.2 614.0,445.1 622.4,469.0 630.8,507.0 639.1,502.2 647.4,497.3 655.8,508.0 664.1,488.5 672.5,499.2 680.9,479.4 689.2,515.8 697.6,500.2 705.9,510.3 714.2,513.8 722.6,504.1 730.9,513.8 739.3,518.7 764.3,518.1 789.4,516.7 814.5,535.6 839.5,510.3 864.5,545.9" fill="none" stroke="#f4f444" stroke-width="1.25" stroke-linejoin="miter"/><polyline points="313.4,536.7 338.5,525.5 363.5,510.3 388.6,540.4 413.6,528.2 438.7,542.4 463.8,541.1 488.8,541.2 497.1,529.0 505.5,517.0 513.9,529.2 522.2,537.0 530.5,458.3 538.9,498.7 547.2,493.0 555.6,507.0 564.0,506.1 572.3,494.4 580.6,496.3 589.0,508.0 597.3,496.3 605.7,506.4 614.0,506.4 622.4,492.4 630.8,507.0 639.1,506.1 647.4,491.4 655.8,506.1 664.1,508.4 672.5,496.3 680.9,485.6 689.2,509.0 697.6,493.4 705.9,507.0 714.2,509.0 722.6,494.4 730.9,507.0 739.3,508.4 764.3,540.1 789.4,538.5 814.5,539.1 839.5,534.8 864.5,512.2" fill="none" stroke="#38dcee" stroke-width="1.25" stroke-linejoin="miter"/></g>
<rect x="311.5" y="569.5" width="454" height="22" fill="#fff" stroke="#000" stroke-width="1"/>
<line x1="314.0" y1="580.5" x2="329.0" y2="580.5" stroke="#1c1896" stroke-width="1.05"/>
<text x="333.5" y="584.8" class="lg">Read/s</text>
<line x1="378.2" y1="580.5" x2="393.2" y2="580.5" stroke="#44c444" stroke-width="1.05"/>
<text x="397.2" y="584.8" class="lg">Write/s</text>
<line x1="440.1" y1="580.5" x2="455.1" y2="580.5" stroke="#b02a2a" stroke-width="1.05"/>
<text x="459.6" y="584.8" class="lg">Syscall/s</text>
<line x1="513.3" y1="580.5" x2="528.3" y2="580.5" stroke="#141414" stroke-width="1.05"/>
<text x="532.4" y="584.8" class="lg">Fork/s</text>
<line x1="571.1" y1="580.5" x2="586.1" y2="580.5" stroke="#b034c0" stroke-width="1.05"/>
<text x="590.6" y="584.8" class="lg">Exec/s</text>
<line x1="631.0" y1="580.5" x2="646.0" y2="580.5" stroke="#e6ee50" stroke-width="1.05"/>
<text x="650.7" y="584.8" class="lg">Rchar/s</text>
<line x1="698.1" y1="580.5" x2="713.1" y2="580.5" stroke="#50d0d4" stroke-width="1.05"/>
<text x="717.1" y="584.8" class="lg">Wchar/s</text>
</svg>
</body></html>
